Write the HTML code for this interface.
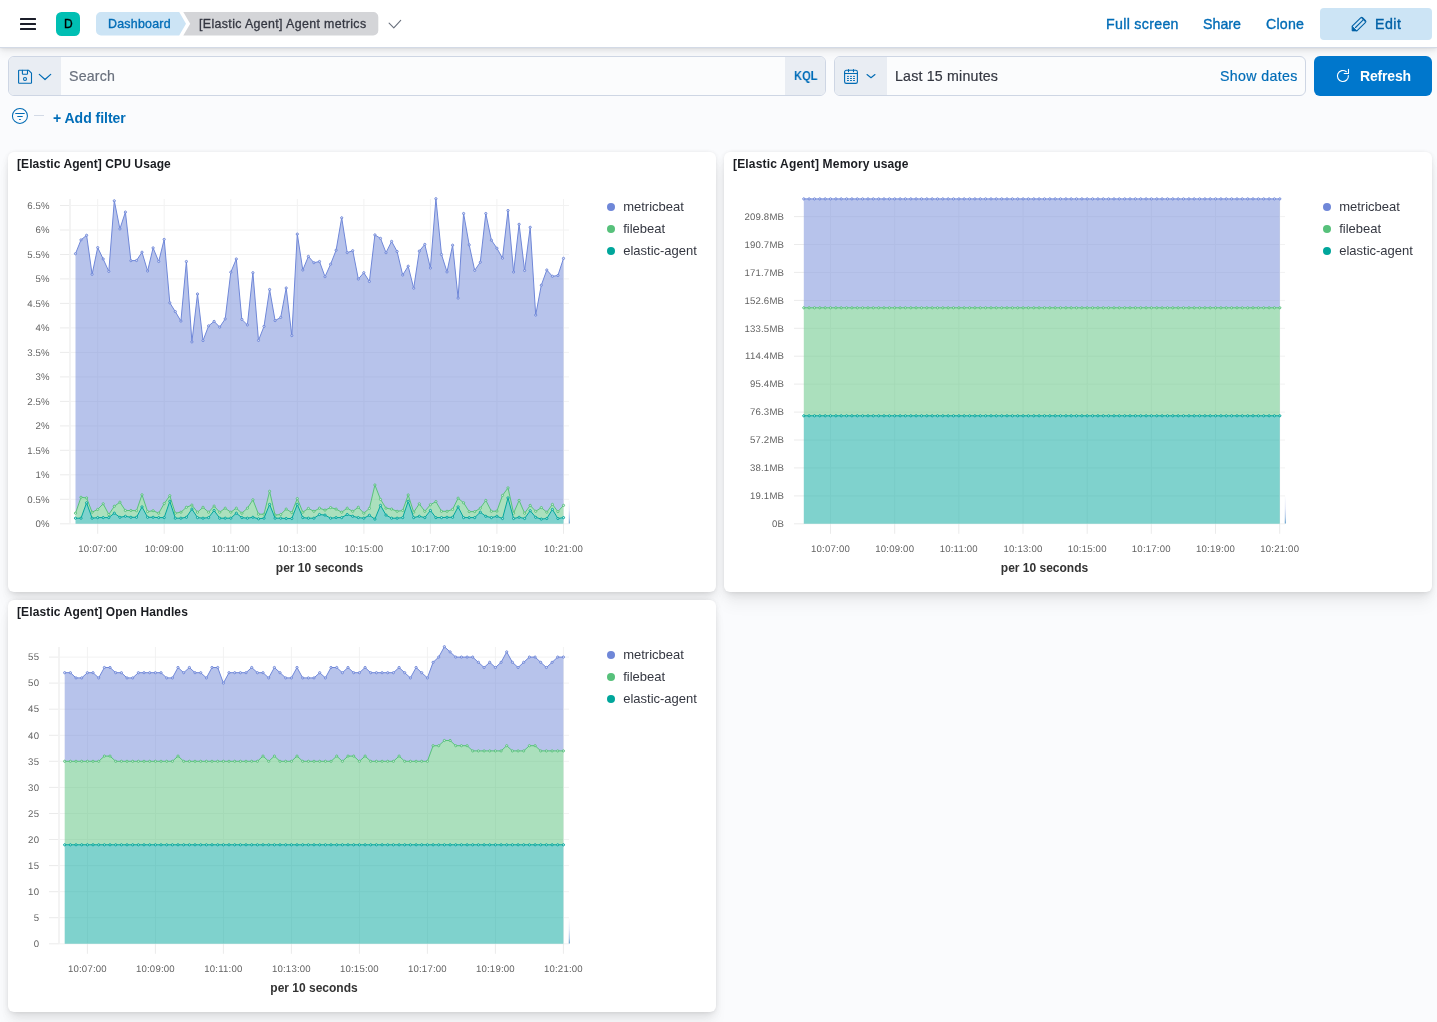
<!DOCTYPE html>
<html lang="en">
<head>
<meta charset="utf-8">
<title>[Elastic Agent] Agent metrics - Elastic</title>
<style>
*{box-sizing:border-box}
html,body{margin:0;padding:0}
body{width:1437px;height:1022px;overflow:hidden;background:#FAFBFD;font-family:"Liberation Sans",sans-serif;color:#343741;position:relative}
.abs{position:absolute}
.t{position:absolute;white-space:nowrap;line-height:1;will-change:transform}
/* header */
#hdr{left:0;top:0;width:1437px;height:48px;background:#fff;border-bottom:1px solid #D3DAE6;box-shadow:0 .7px 1.4px rgba(0,0,0,.07),0 1.9px 4px rgba(0,0,0,.06),0 4.5px 10px rgba(0,0,0,.06)}
.hb{position:absolute;left:20px;width:16px;height:2px;background:#1C1E2A;border-radius:.5px}
#av{left:56px;top:12px;width:24px;height:24px;border-radius:5.5px;background:#00BFB3}
.bc{position:absolute;top:12px;height:23.5px}
.lnk{color:#006DB8}
#edit{left:1320px;top:8px;width:112px;height:32px;border-radius:4px;background:#CCE4F5}
/* query bar */
.fld{position:absolute;top:56px;height:40px;border:1px solid #CED6E4;border-radius:6px;background:#FBFCFD;overflow:hidden}
.pre{position:absolute;top:0;bottom:0;background:#E9EDF3}
#refresh{left:1314px;top:56px;width:118px;height:40px;border-radius:6px;background:#0077CC}
/* panels */
.pn{position:absolute;background:#fff;border-radius:6px;box-shadow:0 .9px 4px -1px rgba(0,0,0,.08),0 2.6px 8px -1px rgba(0,0,0,.06),0 5.7px 12px -1px rgba(0,0,0,.05),0 15px 15px -1px rgba(0,0,0,.04)}
.pt{will-change:transform;position:absolute;left:8.6px;top:4.7px;font-size:12px;font-weight:700;color:#1A1C21;white-space:nowrap;line-height:14px;letter-spacing:.09px}
svg text{font-family:"Liberation Sans",sans-serif}
.tk{font-size:9.6px;letter-spacing:.2px;fill:#636363;text-rendering:geometricPrecision}
.ax{font-size:12px;font-weight:700;fill:#333}
.lg{font-size:13px;fill:#343741}
</style>
</head>
<body>

<!-- top header -->
<div id="hdr" class="abs">
  <div class="hb" style="top:18px"></div><div class="hb" style="top:23px"></div><div class="hb" style="top:28px"></div>
  <div id="av" class="abs"></div>
  <div class="t" style="left:63.8px;top:17.7px;font-size:12px;font-weight:400;color:#000;-webkit-text-stroke:.35px #000">D</div>
  <svg class="abs" style="left:96px;top:12px" width="290" height="24" viewBox="0 0 290 24">
    <path d="M5,0 H83.2 L90,11.75 L83.2,23.5 H5 A5,5 0 0 1 0,18.5 V5 A5,5 0 0 1 5,0Z" fill="#CCE4F5"/>
    <path d="M87.3,0 H277.3 A5,5 0 0 1 282.3,5 V18.5 A5,5 0 0 1 277.3,23.5 H87.3 L94.2,11.75Z" fill="#D4D5D8"/>
  </svg>
  <div class="t lnk" style="left:107.6px;top:18.1px;font-size:12.4px;font-weight:400;letter-spacing:.24px;-webkit-text-stroke:.35px #006BB4">Dashboard</div>
  <div class="t" style="left:199.3px;top:18.1px;font-size:12.4px;letter-spacing:.36px;color:#343741;-webkit-text-stroke:.3px #343741">[Elastic Agent] Agent metrics</div>
  <svg class="abs" style="left:386px;top:16px" width="20" height="16" viewBox="0 0 20 16"><path d="M3.1,7.2 L7.8,11.8 L14.7,4.3" fill="none" stroke="#69707D" stroke-width="1.1" stroke-linecap="round" stroke-linejoin="round"/></svg>

  <div class="t lnk" style="left:1105.7px;top:17px;font-size:14.2px;letter-spacing:.31px;-webkit-text-stroke:.35px #006BB4">Full screen</div>
  <div class="t lnk" style="left:1202.9px;top:17px;font-size:14.2px;letter-spacing:.02px;-webkit-text-stroke:.35px #006BB4">Share</div>
  <div class="t lnk" style="left:1265.7px;top:17px;font-size:14.2px;letter-spacing:.2px;-webkit-text-stroke:.35px #006BB4">Clone</div>
  <div id="edit" class="abs"></div>
  <svg class="abs" style="left:1350px;top:15px" width="18" height="18" viewBox="0 0 18 18">
    <g fill="none" stroke="#0061A6" stroke-width="1.1" stroke-linejoin="round" stroke-linecap="round">
      <path d="M2.2,11.2 L10.9,2.7 Q11.65,1.95 12.5,2.75 L15.5,5.75 Q16.3,6.55 15.55,7.4 L6.9,15.8"/>
      <path d="M12.1,3.35 L14.95,6.2" stroke-width="1.1"/>
      <path d="M5.5,12.5 L12.7,5.4"/>
    </g>
    <path d="M2.1,11.2 L6.9,15.9 H2.1Z" fill="#0061A6" stroke="#0061A6" stroke-width=".8" stroke-linejoin="round"/>
  </svg>
  <div class="t" style="left:1374.9px;top:17px;font-size:14.2px;letter-spacing:.48px;color:#0061A6;-webkit-text-stroke:.35px #0061A6">Edit</div>
</div>

<!-- query bar -->
<div class="fld" style="left:8px;width:818px">
  <div class="pre" style="left:0;width:52px"></div>
  <div class="pre" style="right:0;width:40px"></div>
</div>
<svg class="abs" style="left:16px;top:68px" width="40" height="18" viewBox="0 0 40 18">
  <g fill="none" stroke="#006BB4" stroke-width="1.1" stroke-linejoin="round" stroke-linecap="round">
    <path d="M3.1,2.3 H12.7 L15.5,5.2 V14.8 Q15.5,15.3 15,15.3 H3.1 Q2.6,15.3 2.6,14.8 V2.8 Q2.6,2.3 3.1,2.3Z"/>
    <path d="M6.4,2.3 V5.7 Q6.4,6.25 7,6.25 H10.9 Q11.5,6.25 11.5,5.7 V2.3"/>
    <circle cx="9" cy="11" r="1.5"/>
    <path d="M23.3,6.4 L29,11.5 L34.7,6.4" stroke-width="1.2"/>
  </g>
</svg>
<div class="t" style="left:69.3px;top:69.2px;font-size:14.2px;letter-spacing:.2px;color:#69707D;-webkit-text-stroke:.2px #69707D">Search</div>
<div class="t lnk" style="left:793.6px;top:70.3px;font-size:12.4px;font-weight:700;transform:scaleX(.9);transform-origin:0 0">KQL</div>

<div class="fld" style="left:834px;width:472px">
  <div class="pre" style="left:0;width:52px"></div>
</div>
<svg class="abs" style="left:842px;top:66px" width="40" height="20" viewBox="0 0 40 20">
  <g fill="none" stroke="#006BB4" stroke-width="1.1" stroke-linejoin="round" stroke-linecap="round">
    <rect x="2.6" y="4.3" width="12.8" height="13.1" rx="1.7"/>
    <path d="M2.6,7.5 H15.4"/>
    <path d="M6.5,3.5 V5.7 M11.5,3.5 V5.7"/>
    <path d="M5.40,10.4 h1.1 M8.45,10.4 h1.1 M11.45,10.4 h1.1 M5.40,12.5 h1.1 M8.45,12.5 h1.1 M11.45,12.5 h1.1 M5.40,14.5 h1.1 M8.45,14.5 h1.1 M11.45,14.5 h1.1" stroke-width=".95"/>
    <path d="M25,8.5 L29,11.75 L33,8.5"/>
  </g>
</svg>
<div class="t" style="left:895.2px;top:69.2px;font-size:14.2px;letter-spacing:.2px;color:#343741;-webkit-text-stroke:.2px #343741">Last 15 minutes</div>
<div class="t lnk" style="left:1219.5px;top:69.2px;font-size:14.2px;letter-spacing:.35px;-webkit-text-stroke:.2px #006BB4">Show dates</div>

<div id="refresh" class="abs"></div>
<svg class="abs" style="left:1334px;top:67px" width="18" height="18" viewBox="0 0 18 18">
  <g fill="none" stroke="#fff" stroke-width="1.1" stroke-linecap="round" stroke-linejoin="round">
    <path d="M12.36,4.73 A5.5,5.5 0 1 0 14.37,8.43"/>
    <path d="M14.5,2.2 V6.5 H10.2"/>
  </g>
</svg>
<div class="t" style="left:1359.8px;top:69.3px;font-size:14px;font-weight:700;letter-spacing:-.18px;color:#fff">Refresh</div>

<!-- filter row -->
<svg class="abs" style="left:10px;top:106px" width="40" height="20" viewBox="0 0 40 20">
  <g fill="none" stroke="#006BB4" stroke-width="1.05" stroke-linecap="round">
    <circle cx="9.93" cy="9.93" r="7.5"/>
    <path d="M5.7,7.5 H14.3 M7.7,10.45 H12.3 M9.5,13.45 H10.4"/>
  </g>
  <path d="M24,9.5 H34" stroke="#D3DAE6" stroke-width="1"/>
</svg>
<div class="t lnk" style="left:53.1px;top:110.9px;font-size:14px;font-weight:700;letter-spacing:-.02px">+ Add filter</div>

<!-- panels -->
<div class="pn" style="left:8px;top:152px;width:708px;height:439.7px"><div class="pt">[Elastic Agent] CPU Usage</div></div>
<div class="pn" style="left:724px;top:152px;width:708px;height:439.7px"><div class="pt" style="letter-spacing:.17px">[Elastic Agent] Memory usage</div></div>
<div class="pn" style="left:8px;top:600px;width:708px;height:411.7px"><div class="pt" style="letter-spacing:.12px">[Elastic Agent] Open Handles</div></div>

<svg class="abs" style="left:0;top:0" width="1437" height="1022" viewBox="0 0 1437 1022" shape-rendering="geometricPrecision">
<defs><linearGradient id="fade" x1="0" y1="0" x2="0" y2="1"><stop offset="0" stop-color="#6F87D8" stop-opacity="0"/><stop offset=".45" stop-color="#6F87D8" stop-opacity=".22"/><stop offset=".8" stop-color="#4A86C8" stop-opacity=".6"/><stop offset="1" stop-color="#2F7FB8" stop-opacity="1"/></linearGradient></defs>
<line x1="70" x2="569" y1="523.8" y2="523.8" stroke="#F2F2F2"/><line x1="60" x2="70" y1="523.8" y2="523.8" stroke="#EBEBEB"/><text x="49.8" y="527" text-anchor="end" class="tk">0%</text><line x1="70" x2="569" y1="499.3" y2="499.3" stroke="#F2F2F2"/><line x1="60" x2="70" y1="499.3" y2="499.3" stroke="#EBEBEB"/><text x="49.8" y="502.5" text-anchor="end" class="tk">0.5%</text><line x1="70" x2="569" y1="474.8" y2="474.8" stroke="#F2F2F2"/><line x1="60" x2="70" y1="474.8" y2="474.8" stroke="#EBEBEB"/><text x="49.8" y="478" text-anchor="end" class="tk">1%</text><line x1="70" x2="569" y1="450.3" y2="450.3" stroke="#F2F2F2"/><line x1="60" x2="70" y1="450.3" y2="450.3" stroke="#EBEBEB"/><text x="49.8" y="453.5" text-anchor="end" class="tk">1.5%</text><line x1="70" x2="569" y1="425.9" y2="425.9" stroke="#F2F2F2"/><line x1="60" x2="70" y1="425.9" y2="425.9" stroke="#EBEBEB"/><text x="49.8" y="429.1" text-anchor="end" class="tk">2%</text><line x1="70" x2="569" y1="401.4" y2="401.4" stroke="#F2F2F2"/><line x1="60" x2="70" y1="401.4" y2="401.4" stroke="#EBEBEB"/><text x="49.8" y="404.6" text-anchor="end" class="tk">2.5%</text><line x1="70" x2="569" y1="376.9" y2="376.9" stroke="#F2F2F2"/><line x1="60" x2="70" y1="376.9" y2="376.9" stroke="#EBEBEB"/><text x="49.8" y="380.1" text-anchor="end" class="tk">3%</text><line x1="70" x2="569" y1="352.4" y2="352.4" stroke="#F2F2F2"/><line x1="60" x2="70" y1="352.4" y2="352.4" stroke="#EBEBEB"/><text x="49.8" y="355.6" text-anchor="end" class="tk">3.5%</text><line x1="70" x2="569" y1="327.9" y2="327.9" stroke="#F2F2F2"/><line x1="60" x2="70" y1="327.9" y2="327.9" stroke="#EBEBEB"/><text x="49.8" y="331.1" text-anchor="end" class="tk">4%</text><line x1="70" x2="569" y1="303.4" y2="303.4" stroke="#F2F2F2"/><line x1="60" x2="70" y1="303.4" y2="303.4" stroke="#EBEBEB"/><text x="49.8" y="306.6" text-anchor="end" class="tk">4.5%</text><line x1="70" x2="569" y1="278.9" y2="278.9" stroke="#F2F2F2"/><line x1="60" x2="70" y1="278.9" y2="278.9" stroke="#EBEBEB"/><text x="49.8" y="282.1" text-anchor="end" class="tk">5%</text><line x1="70" x2="569" y1="254.5" y2="254.5" stroke="#F2F2F2"/><line x1="60" x2="70" y1="254.5" y2="254.5" stroke="#EBEBEB"/><text x="49.8" y="257.7" text-anchor="end" class="tk">5.5%</text><line x1="70" x2="569" y1="230" y2="230" stroke="#F2F2F2"/><line x1="60" x2="70" y1="230" y2="230" stroke="#EBEBEB"/><text x="49.8" y="233.2" text-anchor="end" class="tk">6%</text><line x1="70" x2="569" y1="205.5" y2="205.5" stroke="#F2F2F2"/><line x1="60" x2="70" y1="205.5" y2="205.5" stroke="#EBEBEB"/><text x="49.8" y="208.7" text-anchor="end" class="tk">6.5%</text><line x1="97.7" x2="97.7" y1="199" y2="523.8" stroke="#F2F2F2"/><line x1="97.7" x2="97.7" y1="523.8" y2="533.8" stroke="#EBEBEB"/><text x="97.7" y="552.3" text-anchor="middle" class="tk">10:07:00</text><line x1="164.2" x2="164.2" y1="199" y2="523.8" stroke="#F2F2F2"/><line x1="164.2" x2="164.2" y1="523.8" y2="533.8" stroke="#EBEBEB"/><text x="164.2" y="552.3" text-anchor="middle" class="tk">10:09:00</text><line x1="230.8" x2="230.8" y1="199" y2="523.8" stroke="#F2F2F2"/><line x1="230.8" x2="230.8" y1="523.8" y2="533.8" stroke="#EBEBEB"/><text x="230.8" y="552.3" text-anchor="middle" class="tk">10:11:00</text><line x1="297.3" x2="297.3" y1="199" y2="523.8" stroke="#F2F2F2"/><line x1="297.3" x2="297.3" y1="523.8" y2="533.8" stroke="#EBEBEB"/><text x="297.3" y="552.3" text-anchor="middle" class="tk">10:13:00</text><line x1="363.9" x2="363.9" y1="199" y2="523.8" stroke="#F2F2F2"/><line x1="363.9" x2="363.9" y1="523.8" y2="533.8" stroke="#EBEBEB"/><text x="363.9" y="552.3" text-anchor="middle" class="tk">10:15:00</text><line x1="430.4" x2="430.4" y1="199" y2="523.8" stroke="#F2F2F2"/><line x1="430.4" x2="430.4" y1="523.8" y2="533.8" stroke="#EBEBEB"/><text x="430.4" y="552.3" text-anchor="middle" class="tk">10:17:00</text><line x1="496.9" x2="496.9" y1="199" y2="523.8" stroke="#F2F2F2"/><line x1="496.9" x2="496.9" y1="523.8" y2="533.8" stroke="#EBEBEB"/><text x="496.9" y="552.3" text-anchor="middle" class="tk">10:19:00</text><line x1="563.5" x2="563.5" y1="199" y2="523.8" stroke="#F2F2F2"/><line x1="563.5" x2="563.5" y1="523.8" y2="533.8" stroke="#EBEBEB"/><text x="563.5" y="552.3" text-anchor="middle" class="tk">10:21:00</text><line x1="70" x2="70" y1="199" y2="523.8" stroke="#F2F2F2" stroke-width="1.8"/><text x="319.5" y="572" text-anchor="middle" class="ax">per 10 seconds</text><path d="M75.5,253.7 L81,239.9 L86.6,235.3 L92.1,274.3 L97.7,247.6 L103.2,259 L108.8,271.4 L114.3,200.8 L119.9,228.9 L125.4,212.1 L130.9,260.7 L136.5,260.5 L142,252.2 L147.6,271 L153.1,247.9 L158.7,261.5 L164.2,239.4 L169.8,302.8 L175.3,311.6 L180.9,321.1 L186.4,261.5 L191.9,341.9 L197.5,294 L203,340.6 L208.6,325.9 L214.1,321.4 L219.7,327.1 L225.2,318.9 L230.8,272.2 L236.3,259 L241.8,319.4 L247.4,324.9 L252.9,272.7 L258.5,340.4 L264,326.4 L269.6,289.5 L275.1,320.6 L280.7,317.4 L286.2,288 L291.8,335.6 L297.3,234.1 L302.8,270 L308.4,256.4 L313.9,262.7 L319.5,261.5 L325,276.7 L330.6,264.2 L336.1,250.2 L341.7,217.8 L347.2,252.6 L352.8,250.7 L358.3,279 L363.8,272.7 L369.4,281.5 L374.9,234.9 L380.5,238.4 L386,252.7 L391.6,241.4 L397.1,251.5 L402.7,275 L408.2,266.2 L413.7,288.2 L419.3,251.1 L424.8,244.4 L430.4,268 L435.9,198.7 L441.5,254.5 L447,271.9 L452.6,245.2 L458.1,298.1 L463.6,213.5 L469.2,244.9 L474.7,270.4 L480.3,262.2 L485.8,213.5 L491.4,240.2 L496.9,248.2 L502.5,258.2 L508,210.5 L513.6,272 L519.1,224.3 L524.6,270.5 L530.2,227.3 L535.7,315.1 L541.3,285.2 L546.8,270 L552.4,276.3 L557.9,275.5 L563.5,258.4 L563.5,505.4 L557.9,511.6 L552.4,504.4 L546.8,512.2 L541.3,507.6 L535.7,511.3 L530.2,505.4 L524.6,513.2 L519.1,500.4 L513.6,513.2 L508,487.9 L502.5,495.4 L496.9,511.1 L491.4,511.3 L485.8,500.4 L480.3,508.2 L474.7,511.6 L469.2,511.6 L463.6,502.8 L458.1,498.2 L452.6,509.4 L447,511.3 L441.5,511.3 L435.9,501.6 L430.4,504.7 L424.8,511.3 L419.3,503.8 L413.7,512.2 L408.2,495 L402.7,510.5 L397.1,511.3 L391.6,509.1 L386,508.2 L380.5,499.4 L374.9,485 L369.4,508.4 L363.8,513.2 L358.3,507.3 L352.8,511.3 L347.2,508.2 L341.7,512.2 L336.1,509.1 L330.6,507.6 L325,510.1 L319.5,508.2 L313.9,511.3 L308.4,508.4 L302.8,512.2 L297.3,498.6 L291.8,512.6 L286.2,509.1 L280.7,514.5 L275.1,515.1 L269.6,491.3 L264,514.2 L258.5,514.2 L252.9,499.8 L247.4,508.2 L241.8,513.2 L236.3,508.2 L230.8,512.2 L225.2,508.2 L219.7,512.2 L214.1,506.1 L208.6,512.2 L203,507.3 L197.5,512.2 L191.9,505.1 L186.4,507.3 L180.9,512.2 L175.3,513.2 L169.8,495.7 L164.2,503.6 L158.7,513.2 L153.1,510.7 L147.6,511.6 L142,494.8 L136.5,510.7 L130.9,510.5 L125.4,510.5 L119.9,502.2 L114.3,506.3 L108.8,514.5 L103.2,503.8 L97.7,509.4 L92.1,512.2 L86.6,497.9 L81,497.3 L75.5,513.2Z" fill="#6F87D8" fill-opacity="0.5"/><path d="M75.5,253.7 L81,239.9 L86.6,235.3 L92.1,274.3 L97.7,247.6 L103.2,259 L108.8,271.4 L114.3,200.8 L119.9,228.9 L125.4,212.1 L130.9,260.7 L136.5,260.5 L142,252.2 L147.6,271 L153.1,247.9 L158.7,261.5 L164.2,239.4 L169.8,302.8 L175.3,311.6 L180.9,321.1 L186.4,261.5 L191.9,341.9 L197.5,294 L203,340.6 L208.6,325.9 L214.1,321.4 L219.7,327.1 L225.2,318.9 L230.8,272.2 L236.3,259 L241.8,319.4 L247.4,324.9 L252.9,272.7 L258.5,340.4 L264,326.4 L269.6,289.5 L275.1,320.6 L280.7,317.4 L286.2,288 L291.8,335.6 L297.3,234.1 L302.8,270 L308.4,256.4 L313.9,262.7 L319.5,261.5 L325,276.7 L330.6,264.2 L336.1,250.2 L341.7,217.8 L347.2,252.6 L352.8,250.7 L358.3,279 L363.8,272.7 L369.4,281.5 L374.9,234.9 L380.5,238.4 L386,252.7 L391.6,241.4 L397.1,251.5 L402.7,275 L408.2,266.2 L413.7,288.2 L419.3,251.1 L424.8,244.4 L430.4,268 L435.9,198.7 L441.5,254.5 L447,271.9 L452.6,245.2 L458.1,298.1 L463.6,213.5 L469.2,244.9 L474.7,270.4 L480.3,262.2 L485.8,213.5 L491.4,240.2 L496.9,248.2 L502.5,258.2 L508,210.5 L513.6,272 L519.1,224.3 L524.6,270.5 L530.2,227.3 L535.7,315.1 L541.3,285.2 L546.8,270 L552.4,276.3 L557.9,275.5 L563.5,258.4" fill="none" stroke="#6F87D8" stroke-width="1" stroke-linejoin="round"/><path d="M74.4,253.7a1.1,1.1 0 1,0 2.2,0a1.1,1.1 0 1,0 -2.2,0M79.9,239.9a1.1,1.1 0 1,0 2.2,0a1.1,1.1 0 1,0 -2.2,0M85.5,235.3a1.1,1.1 0 1,0 2.2,0a1.1,1.1 0 1,0 -2.2,0M91,274.3a1.1,1.1 0 1,0 2.2,0a1.1,1.1 0 1,0 -2.2,0M96.6,247.6a1.1,1.1 0 1,0 2.2,0a1.1,1.1 0 1,0 -2.2,0M102.1,259a1.1,1.1 0 1,0 2.2,0a1.1,1.1 0 1,0 -2.2,0M107.7,271.4a1.1,1.1 0 1,0 2.2,0a1.1,1.1 0 1,0 -2.2,0M113.2,200.8a1.1,1.1 0 1,0 2.2,0a1.1,1.1 0 1,0 -2.2,0M118.8,228.9a1.1,1.1 0 1,0 2.2,0a1.1,1.1 0 1,0 -2.2,0M124.3,212.1a1.1,1.1 0 1,0 2.2,0a1.1,1.1 0 1,0 -2.2,0M129.8,260.7a1.1,1.1 0 1,0 2.2,0a1.1,1.1 0 1,0 -2.2,0M135.4,260.5a1.1,1.1 0 1,0 2.2,0a1.1,1.1 0 1,0 -2.2,0M140.9,252.2a1.1,1.1 0 1,0 2.2,0a1.1,1.1 0 1,0 -2.2,0M146.5,271a1.1,1.1 0 1,0 2.2,0a1.1,1.1 0 1,0 -2.2,0M152,247.9a1.1,1.1 0 1,0 2.2,0a1.1,1.1 0 1,0 -2.2,0M157.6,261.5a1.1,1.1 0 1,0 2.2,0a1.1,1.1 0 1,0 -2.2,0M163.1,239.4a1.1,1.1 0 1,0 2.2,0a1.1,1.1 0 1,0 -2.2,0M168.7,302.8a1.1,1.1 0 1,0 2.2,0a1.1,1.1 0 1,0 -2.2,0M174.2,311.6a1.1,1.1 0 1,0 2.2,0a1.1,1.1 0 1,0 -2.2,0M179.8,321.1a1.1,1.1 0 1,0 2.2,0a1.1,1.1 0 1,0 -2.2,0M185.3,261.5a1.1,1.1 0 1,0 2.2,0a1.1,1.1 0 1,0 -2.2,0M190.8,341.9a1.1,1.1 0 1,0 2.2,0a1.1,1.1 0 1,0 -2.2,0M196.4,294a1.1,1.1 0 1,0 2.2,0a1.1,1.1 0 1,0 -2.2,0M201.9,340.6a1.1,1.1 0 1,0 2.2,0a1.1,1.1 0 1,0 -2.2,0M207.5,325.9a1.1,1.1 0 1,0 2.2,0a1.1,1.1 0 1,0 -2.2,0M213,321.4a1.1,1.1 0 1,0 2.2,0a1.1,1.1 0 1,0 -2.2,0M218.6,327.1a1.1,1.1 0 1,0 2.2,0a1.1,1.1 0 1,0 -2.2,0M224.1,318.9a1.1,1.1 0 1,0 2.2,0a1.1,1.1 0 1,0 -2.2,0M229.7,272.2a1.1,1.1 0 1,0 2.2,0a1.1,1.1 0 1,0 -2.2,0M235.2,259a1.1,1.1 0 1,0 2.2,0a1.1,1.1 0 1,0 -2.2,0M240.8,319.4a1.1,1.1 0 1,0 2.2,0a1.1,1.1 0 1,0 -2.2,0M246.3,324.9a1.1,1.1 0 1,0 2.2,0a1.1,1.1 0 1,0 -2.2,0M251.8,272.7a1.1,1.1 0 1,0 2.2,0a1.1,1.1 0 1,0 -2.2,0M257.4,340.4a1.1,1.1 0 1,0 2.2,0a1.1,1.1 0 1,0 -2.2,0M262.9,326.4a1.1,1.1 0 1,0 2.2,0a1.1,1.1 0 1,0 -2.2,0M268.5,289.5a1.1,1.1 0 1,0 2.2,0a1.1,1.1 0 1,0 -2.2,0M274,320.6a1.1,1.1 0 1,0 2.2,0a1.1,1.1 0 1,0 -2.2,0M279.6,317.4a1.1,1.1 0 1,0 2.2,0a1.1,1.1 0 1,0 -2.2,0M285.1,288a1.1,1.1 0 1,0 2.2,0a1.1,1.1 0 1,0 -2.2,0M290.7,335.6a1.1,1.1 0 1,0 2.2,0a1.1,1.1 0 1,0 -2.2,0M296.2,234.1a1.1,1.1 0 1,0 2.2,0a1.1,1.1 0 1,0 -2.2,0M301.7,270a1.1,1.1 0 1,0 2.2,0a1.1,1.1 0 1,0 -2.2,0M307.3,256.4a1.1,1.1 0 1,0 2.2,0a1.1,1.1 0 1,0 -2.2,0M312.8,262.7a1.1,1.1 0 1,0 2.2,0a1.1,1.1 0 1,0 -2.2,0M318.4,261.5a1.1,1.1 0 1,0 2.2,0a1.1,1.1 0 1,0 -2.2,0M323.9,276.7a1.1,1.1 0 1,0 2.2,0a1.1,1.1 0 1,0 -2.2,0M329.5,264.2a1.1,1.1 0 1,0 2.2,0a1.1,1.1 0 1,0 -2.2,0M335,250.2a1.1,1.1 0 1,0 2.2,0a1.1,1.1 0 1,0 -2.2,0M340.6,217.8a1.1,1.1 0 1,0 2.2,0a1.1,1.1 0 1,0 -2.2,0M346.1,252.6a1.1,1.1 0 1,0 2.2,0a1.1,1.1 0 1,0 -2.2,0M351.6,250.7a1.1,1.1 0 1,0 2.2,0a1.1,1.1 0 1,0 -2.2,0M357.2,279a1.1,1.1 0 1,0 2.2,0a1.1,1.1 0 1,0 -2.2,0M362.7,272.7a1.1,1.1 0 1,0 2.2,0a1.1,1.1 0 1,0 -2.2,0M368.3,281.5a1.1,1.1 0 1,0 2.2,0a1.1,1.1 0 1,0 -2.2,0M373.8,234.9a1.1,1.1 0 1,0 2.2,0a1.1,1.1 0 1,0 -2.2,0M379.4,238.4a1.1,1.1 0 1,0 2.2,0a1.1,1.1 0 1,0 -2.2,0M384.9,252.7a1.1,1.1 0 1,0 2.2,0a1.1,1.1 0 1,0 -2.2,0M390.5,241.4a1.1,1.1 0 1,0 2.2,0a1.1,1.1 0 1,0 -2.2,0M396,251.5a1.1,1.1 0 1,0 2.2,0a1.1,1.1 0 1,0 -2.2,0M401.6,275a1.1,1.1 0 1,0 2.2,0a1.1,1.1 0 1,0 -2.2,0M407.1,266.2a1.1,1.1 0 1,0 2.2,0a1.1,1.1 0 1,0 -2.2,0M412.6,288.2a1.1,1.1 0 1,0 2.2,0a1.1,1.1 0 1,0 -2.2,0M418.2,251.1a1.1,1.1 0 1,0 2.2,0a1.1,1.1 0 1,0 -2.2,0M423.7,244.4a1.1,1.1 0 1,0 2.2,0a1.1,1.1 0 1,0 -2.2,0M429.3,268a1.1,1.1 0 1,0 2.2,0a1.1,1.1 0 1,0 -2.2,0M434.8,198.7a1.1,1.1 0 1,0 2.2,0a1.1,1.1 0 1,0 -2.2,0M440.4,254.5a1.1,1.1 0 1,0 2.2,0a1.1,1.1 0 1,0 -2.2,0M445.9,271.9a1.1,1.1 0 1,0 2.2,0a1.1,1.1 0 1,0 -2.2,0M451.5,245.2a1.1,1.1 0 1,0 2.2,0a1.1,1.1 0 1,0 -2.2,0M457,298.1a1.1,1.1 0 1,0 2.2,0a1.1,1.1 0 1,0 -2.2,0M462.5,213.5a1.1,1.1 0 1,0 2.2,0a1.1,1.1 0 1,0 -2.2,0M468.1,244.9a1.1,1.1 0 1,0 2.2,0a1.1,1.1 0 1,0 -2.2,0M473.6,270.4a1.1,1.1 0 1,0 2.2,0a1.1,1.1 0 1,0 -2.2,0M479.2,262.2a1.1,1.1 0 1,0 2.2,0a1.1,1.1 0 1,0 -2.2,0M484.7,213.5a1.1,1.1 0 1,0 2.2,0a1.1,1.1 0 1,0 -2.2,0M490.3,240.2a1.1,1.1 0 1,0 2.2,0a1.1,1.1 0 1,0 -2.2,0M495.8,248.2a1.1,1.1 0 1,0 2.2,0a1.1,1.1 0 1,0 -2.2,0M501.4,258.2a1.1,1.1 0 1,0 2.2,0a1.1,1.1 0 1,0 -2.2,0M506.9,210.5a1.1,1.1 0 1,0 2.2,0a1.1,1.1 0 1,0 -2.2,0M512.5,272a1.1,1.1 0 1,0 2.2,0a1.1,1.1 0 1,0 -2.2,0M518,224.3a1.1,1.1 0 1,0 2.2,0a1.1,1.1 0 1,0 -2.2,0M523.5,270.5a1.1,1.1 0 1,0 2.2,0a1.1,1.1 0 1,0 -2.2,0M529.1,227.3a1.1,1.1 0 1,0 2.2,0a1.1,1.1 0 1,0 -2.2,0M534.6,315.1a1.1,1.1 0 1,0 2.2,0a1.1,1.1 0 1,0 -2.2,0M540.2,285.2a1.1,1.1 0 1,0 2.2,0a1.1,1.1 0 1,0 -2.2,0M545.7,270a1.1,1.1 0 1,0 2.2,0a1.1,1.1 0 1,0 -2.2,0M551.3,276.3a1.1,1.1 0 1,0 2.2,0a1.1,1.1 0 1,0 -2.2,0M556.8,275.5a1.1,1.1 0 1,0 2.2,0a1.1,1.1 0 1,0 -2.2,0M562.4,258.4a1.1,1.1 0 1,0 2.2,0a1.1,1.1 0 1,0 -2.2,0" fill="#fff" fill-opacity="0.6" stroke="#6F87D8" stroke-width="1"/><path d="M75.5,513.2 L81,497.3 L86.6,497.9 L92.1,512.2 L97.7,509.4 L103.2,503.8 L108.8,514.5 L114.3,506.3 L119.9,502.2 L125.4,510.5 L130.9,510.5 L136.5,510.7 L142,494.8 L147.6,511.6 L153.1,510.7 L158.7,513.2 L164.2,503.6 L169.8,495.7 L175.3,513.2 L180.9,512.2 L186.4,507.3 L191.9,505.1 L197.5,512.2 L203,507.3 L208.6,512.2 L214.1,506.1 L219.7,512.2 L225.2,508.2 L230.8,512.2 L236.3,508.2 L241.8,513.2 L247.4,508.2 L252.9,499.8 L258.5,514.2 L264,514.2 L269.6,491.3 L275.1,515.1 L280.7,514.5 L286.2,509.1 L291.8,512.6 L297.3,498.6 L302.8,512.2 L308.4,508.4 L313.9,511.3 L319.5,508.2 L325,510.1 L330.6,507.6 L336.1,509.1 L341.7,512.2 L347.2,508.2 L352.8,511.3 L358.3,507.3 L363.8,513.2 L369.4,508.4 L374.9,485 L380.5,499.4 L386,508.2 L391.6,509.1 L397.1,511.3 L402.7,510.5 L408.2,495 L413.7,512.2 L419.3,503.8 L424.8,511.3 L430.4,504.7 L435.9,501.6 L441.5,511.3 L447,511.3 L452.6,509.4 L458.1,498.2 L463.6,502.8 L469.2,511.6 L474.7,511.6 L480.3,508.2 L485.8,500.4 L491.4,511.3 L496.9,511.1 L502.5,495.4 L508,487.9 L513.6,513.2 L519.1,500.4 L524.6,513.2 L530.2,505.4 L535.7,511.3 L541.3,507.6 L546.8,512.2 L552.4,504.4 L557.9,511.6 L563.5,505.4 L563.5,517.6 L557.9,518.5 L552.4,509.4 L546.8,518.5 L541.3,519.1 L535.7,517.3 L530.2,510.7 L524.6,518.5 L519.1,517.3 L513.6,518.5 L508,497.9 L502.5,518.5 L496.9,516.3 L491.4,517.6 L485.8,516.3 L480.3,512.2 L474.7,517.6 L469.2,517.6 L463.6,517.6 L458.1,506.9 L452.6,517.3 L447,517.3 L441.5,517.6 L435.9,517.6 L430.4,510.5 L424.8,517.6 L419.3,516.3 L413.7,517.6 L408.2,501.3 L402.7,517.6 L397.1,518.2 L391.6,518.2 L386,515.1 L380.5,505.4 L374.9,519.1 L369.4,515.3 L363.8,518.2 L358.3,517.6 L352.8,516.3 L347.2,514.5 L341.7,517.6 L336.1,517.6 L330.6,518.2 L325,515.1 L319.5,514.5 L313.9,518.2 L308.4,518.2 L302.8,517.6 L297.3,504.4 L291.8,518.5 L286.2,518.5 L280.7,518.2 L275.1,518.2 L269.6,504.4 L264,518.2 L258.5,518.8 L252.9,517.3 L247.4,518.2 L241.8,517.6 L236.3,513.2 L230.8,518.2 L225.2,518.2 L219.7,518.2 L214.1,510.5 L208.6,517.6 L203,518.2 L197.5,517.6 L191.9,509.1 L186.4,517.3 L180.9,518.2 L175.3,518.2 L169.8,501.3 L164.2,517.6 L158.7,517.6 L153.1,517.3 L147.6,517.3 L142,506.9 L136.5,517.3 L130.9,517.3 L125.4,516.3 L119.9,517.3 L114.3,513.2 L108.8,517.6 L103.2,517.6 L97.7,517.6 L92.1,518.2 L86.6,502.8 L81,518.2 L75.5,518.2Z" fill="#57C17B" fill-opacity="0.5"/><path d="M75.5,513.2 L81,497.3 L86.6,497.9 L92.1,512.2 L97.7,509.4 L103.2,503.8 L108.8,514.5 L114.3,506.3 L119.9,502.2 L125.4,510.5 L130.9,510.5 L136.5,510.7 L142,494.8 L147.6,511.6 L153.1,510.7 L158.7,513.2 L164.2,503.6 L169.8,495.7 L175.3,513.2 L180.9,512.2 L186.4,507.3 L191.9,505.1 L197.5,512.2 L203,507.3 L208.6,512.2 L214.1,506.1 L219.7,512.2 L225.2,508.2 L230.8,512.2 L236.3,508.2 L241.8,513.2 L247.4,508.2 L252.9,499.8 L258.5,514.2 L264,514.2 L269.6,491.3 L275.1,515.1 L280.7,514.5 L286.2,509.1 L291.8,512.6 L297.3,498.6 L302.8,512.2 L308.4,508.4 L313.9,511.3 L319.5,508.2 L325,510.1 L330.6,507.6 L336.1,509.1 L341.7,512.2 L347.2,508.2 L352.8,511.3 L358.3,507.3 L363.8,513.2 L369.4,508.4 L374.9,485 L380.5,499.4 L386,508.2 L391.6,509.1 L397.1,511.3 L402.7,510.5 L408.2,495 L413.7,512.2 L419.3,503.8 L424.8,511.3 L430.4,504.7 L435.9,501.6 L441.5,511.3 L447,511.3 L452.6,509.4 L458.1,498.2 L463.6,502.8 L469.2,511.6 L474.7,511.6 L480.3,508.2 L485.8,500.4 L491.4,511.3 L496.9,511.1 L502.5,495.4 L508,487.9 L513.6,513.2 L519.1,500.4 L524.6,513.2 L530.2,505.4 L535.7,511.3 L541.3,507.6 L546.8,512.2 L552.4,504.4 L557.9,511.6 L563.5,505.4" fill="none" stroke="#57C17B" stroke-width="1" stroke-linejoin="round"/><path d="M74.4,513.2a1.1,1.1 0 1,0 2.2,0a1.1,1.1 0 1,0 -2.2,0M79.9,497.3a1.1,1.1 0 1,0 2.2,0a1.1,1.1 0 1,0 -2.2,0M85.5,497.9a1.1,1.1 0 1,0 2.2,0a1.1,1.1 0 1,0 -2.2,0M91,512.2a1.1,1.1 0 1,0 2.2,0a1.1,1.1 0 1,0 -2.2,0M96.6,509.4a1.1,1.1 0 1,0 2.2,0a1.1,1.1 0 1,0 -2.2,0M102.1,503.8a1.1,1.1 0 1,0 2.2,0a1.1,1.1 0 1,0 -2.2,0M107.7,514.5a1.1,1.1 0 1,0 2.2,0a1.1,1.1 0 1,0 -2.2,0M113.2,506.3a1.1,1.1 0 1,0 2.2,0a1.1,1.1 0 1,0 -2.2,0M118.8,502.2a1.1,1.1 0 1,0 2.2,0a1.1,1.1 0 1,0 -2.2,0M124.3,510.5a1.1,1.1 0 1,0 2.2,0a1.1,1.1 0 1,0 -2.2,0M129.8,510.5a1.1,1.1 0 1,0 2.2,0a1.1,1.1 0 1,0 -2.2,0M135.4,510.7a1.1,1.1 0 1,0 2.2,0a1.1,1.1 0 1,0 -2.2,0M140.9,494.8a1.1,1.1 0 1,0 2.2,0a1.1,1.1 0 1,0 -2.2,0M146.5,511.6a1.1,1.1 0 1,0 2.2,0a1.1,1.1 0 1,0 -2.2,0M152,510.7a1.1,1.1 0 1,0 2.2,0a1.1,1.1 0 1,0 -2.2,0M157.6,513.2a1.1,1.1 0 1,0 2.2,0a1.1,1.1 0 1,0 -2.2,0M163.1,503.6a1.1,1.1 0 1,0 2.2,0a1.1,1.1 0 1,0 -2.2,0M168.7,495.7a1.1,1.1 0 1,0 2.2,0a1.1,1.1 0 1,0 -2.2,0M174.2,513.2a1.1,1.1 0 1,0 2.2,0a1.1,1.1 0 1,0 -2.2,0M179.8,512.2a1.1,1.1 0 1,0 2.2,0a1.1,1.1 0 1,0 -2.2,0M185.3,507.3a1.1,1.1 0 1,0 2.2,0a1.1,1.1 0 1,0 -2.2,0M190.8,505.1a1.1,1.1 0 1,0 2.2,0a1.1,1.1 0 1,0 -2.2,0M196.4,512.2a1.1,1.1 0 1,0 2.2,0a1.1,1.1 0 1,0 -2.2,0M201.9,507.3a1.1,1.1 0 1,0 2.2,0a1.1,1.1 0 1,0 -2.2,0M207.5,512.2a1.1,1.1 0 1,0 2.2,0a1.1,1.1 0 1,0 -2.2,0M213,506.1a1.1,1.1 0 1,0 2.2,0a1.1,1.1 0 1,0 -2.2,0M218.6,512.2a1.1,1.1 0 1,0 2.2,0a1.1,1.1 0 1,0 -2.2,0M224.1,508.2a1.1,1.1 0 1,0 2.2,0a1.1,1.1 0 1,0 -2.2,0M229.7,512.2a1.1,1.1 0 1,0 2.2,0a1.1,1.1 0 1,0 -2.2,0M235.2,508.2a1.1,1.1 0 1,0 2.2,0a1.1,1.1 0 1,0 -2.2,0M240.8,513.2a1.1,1.1 0 1,0 2.2,0a1.1,1.1 0 1,0 -2.2,0M246.3,508.2a1.1,1.1 0 1,0 2.2,0a1.1,1.1 0 1,0 -2.2,0M251.8,499.8a1.1,1.1 0 1,0 2.2,0a1.1,1.1 0 1,0 -2.2,0M257.4,514.2a1.1,1.1 0 1,0 2.2,0a1.1,1.1 0 1,0 -2.2,0M262.9,514.2a1.1,1.1 0 1,0 2.2,0a1.1,1.1 0 1,0 -2.2,0M268.5,491.3a1.1,1.1 0 1,0 2.2,0a1.1,1.1 0 1,0 -2.2,0M274,515.1a1.1,1.1 0 1,0 2.2,0a1.1,1.1 0 1,0 -2.2,0M279.6,514.5a1.1,1.1 0 1,0 2.2,0a1.1,1.1 0 1,0 -2.2,0M285.1,509.1a1.1,1.1 0 1,0 2.2,0a1.1,1.1 0 1,0 -2.2,0M290.7,512.6a1.1,1.1 0 1,0 2.2,0a1.1,1.1 0 1,0 -2.2,0M296.2,498.6a1.1,1.1 0 1,0 2.2,0a1.1,1.1 0 1,0 -2.2,0M301.7,512.2a1.1,1.1 0 1,0 2.2,0a1.1,1.1 0 1,0 -2.2,0M307.3,508.4a1.1,1.1 0 1,0 2.2,0a1.1,1.1 0 1,0 -2.2,0M312.8,511.3a1.1,1.1 0 1,0 2.2,0a1.1,1.1 0 1,0 -2.2,0M318.4,508.2a1.1,1.1 0 1,0 2.2,0a1.1,1.1 0 1,0 -2.2,0M323.9,510.1a1.1,1.1 0 1,0 2.2,0a1.1,1.1 0 1,0 -2.2,0M329.5,507.6a1.1,1.1 0 1,0 2.2,0a1.1,1.1 0 1,0 -2.2,0M335,509.1a1.1,1.1 0 1,0 2.2,0a1.1,1.1 0 1,0 -2.2,0M340.6,512.2a1.1,1.1 0 1,0 2.2,0a1.1,1.1 0 1,0 -2.2,0M346.1,508.2a1.1,1.1 0 1,0 2.2,0a1.1,1.1 0 1,0 -2.2,0M351.6,511.3a1.1,1.1 0 1,0 2.2,0a1.1,1.1 0 1,0 -2.2,0M357.2,507.3a1.1,1.1 0 1,0 2.2,0a1.1,1.1 0 1,0 -2.2,0M362.7,513.2a1.1,1.1 0 1,0 2.2,0a1.1,1.1 0 1,0 -2.2,0M368.3,508.4a1.1,1.1 0 1,0 2.2,0a1.1,1.1 0 1,0 -2.2,0M373.8,485a1.1,1.1 0 1,0 2.2,0a1.1,1.1 0 1,0 -2.2,0M379.4,499.4a1.1,1.1 0 1,0 2.2,0a1.1,1.1 0 1,0 -2.2,0M384.9,508.2a1.1,1.1 0 1,0 2.2,0a1.1,1.1 0 1,0 -2.2,0M390.5,509.1a1.1,1.1 0 1,0 2.2,0a1.1,1.1 0 1,0 -2.2,0M396,511.3a1.1,1.1 0 1,0 2.2,0a1.1,1.1 0 1,0 -2.2,0M401.6,510.5a1.1,1.1 0 1,0 2.2,0a1.1,1.1 0 1,0 -2.2,0M407.1,495a1.1,1.1 0 1,0 2.2,0a1.1,1.1 0 1,0 -2.2,0M412.6,512.2a1.1,1.1 0 1,0 2.2,0a1.1,1.1 0 1,0 -2.2,0M418.2,503.8a1.1,1.1 0 1,0 2.2,0a1.1,1.1 0 1,0 -2.2,0M423.7,511.3a1.1,1.1 0 1,0 2.2,0a1.1,1.1 0 1,0 -2.2,0M429.3,504.7a1.1,1.1 0 1,0 2.2,0a1.1,1.1 0 1,0 -2.2,0M434.8,501.6a1.1,1.1 0 1,0 2.2,0a1.1,1.1 0 1,0 -2.2,0M440.4,511.3a1.1,1.1 0 1,0 2.2,0a1.1,1.1 0 1,0 -2.2,0M445.9,511.3a1.1,1.1 0 1,0 2.2,0a1.1,1.1 0 1,0 -2.2,0M451.5,509.4a1.1,1.1 0 1,0 2.2,0a1.1,1.1 0 1,0 -2.2,0M457,498.2a1.1,1.1 0 1,0 2.2,0a1.1,1.1 0 1,0 -2.2,0M462.5,502.8a1.1,1.1 0 1,0 2.2,0a1.1,1.1 0 1,0 -2.2,0M468.1,511.6a1.1,1.1 0 1,0 2.2,0a1.1,1.1 0 1,0 -2.2,0M473.6,511.6a1.1,1.1 0 1,0 2.2,0a1.1,1.1 0 1,0 -2.2,0M479.2,508.2a1.1,1.1 0 1,0 2.2,0a1.1,1.1 0 1,0 -2.2,0M484.7,500.4a1.1,1.1 0 1,0 2.2,0a1.1,1.1 0 1,0 -2.2,0M490.3,511.3a1.1,1.1 0 1,0 2.2,0a1.1,1.1 0 1,0 -2.2,0M495.8,511.1a1.1,1.1 0 1,0 2.2,0a1.1,1.1 0 1,0 -2.2,0M501.4,495.4a1.1,1.1 0 1,0 2.2,0a1.1,1.1 0 1,0 -2.2,0M506.9,487.9a1.1,1.1 0 1,0 2.2,0a1.1,1.1 0 1,0 -2.2,0M512.5,513.2a1.1,1.1 0 1,0 2.2,0a1.1,1.1 0 1,0 -2.2,0M518,500.4a1.1,1.1 0 1,0 2.2,0a1.1,1.1 0 1,0 -2.2,0M523.5,513.2a1.1,1.1 0 1,0 2.2,0a1.1,1.1 0 1,0 -2.2,0M529.1,505.4a1.1,1.1 0 1,0 2.2,0a1.1,1.1 0 1,0 -2.2,0M534.6,511.3a1.1,1.1 0 1,0 2.2,0a1.1,1.1 0 1,0 -2.2,0M540.2,507.6a1.1,1.1 0 1,0 2.2,0a1.1,1.1 0 1,0 -2.2,0M545.7,512.2a1.1,1.1 0 1,0 2.2,0a1.1,1.1 0 1,0 -2.2,0M551.3,504.4a1.1,1.1 0 1,0 2.2,0a1.1,1.1 0 1,0 -2.2,0M556.8,511.6a1.1,1.1 0 1,0 2.2,0a1.1,1.1 0 1,0 -2.2,0M562.4,505.4a1.1,1.1 0 1,0 2.2,0a1.1,1.1 0 1,0 -2.2,0" fill="#fff" fill-opacity="0.6" stroke="#57C17B" stroke-width="1"/><path d="M75.5,518.2 L81,518.2 L86.6,502.8 L92.1,518.2 L97.7,517.6 L103.2,517.6 L108.8,517.6 L114.3,513.2 L119.9,517.3 L125.4,516.3 L130.9,517.3 L136.5,517.3 L142,506.9 L147.6,517.3 L153.1,517.3 L158.7,517.6 L164.2,517.6 L169.8,501.3 L175.3,518.2 L180.9,518.2 L186.4,517.3 L191.9,509.1 L197.5,517.6 L203,518.2 L208.6,517.6 L214.1,510.5 L219.7,518.2 L225.2,518.2 L230.8,518.2 L236.3,513.2 L241.8,517.6 L247.4,518.2 L252.9,517.3 L258.5,518.8 L264,518.2 L269.6,504.4 L275.1,518.2 L280.7,518.2 L286.2,518.5 L291.8,518.5 L297.3,504.4 L302.8,517.6 L308.4,518.2 L313.9,518.2 L319.5,514.5 L325,515.1 L330.6,518.2 L336.1,517.6 L341.7,517.6 L347.2,514.5 L352.8,516.3 L358.3,517.6 L363.8,518.2 L369.4,515.3 L374.9,519.1 L380.5,505.4 L386,515.1 L391.6,518.2 L397.1,518.2 L402.7,517.6 L408.2,501.3 L413.7,517.6 L419.3,516.3 L424.8,517.6 L430.4,510.5 L435.9,517.6 L441.5,517.6 L447,517.3 L452.6,517.3 L458.1,506.9 L463.6,517.6 L469.2,517.6 L474.7,517.6 L480.3,512.2 L485.8,516.3 L491.4,517.6 L496.9,516.3 L502.5,518.5 L508,497.9 L513.6,518.5 L519.1,517.3 L524.6,518.5 L530.2,510.7 L535.7,517.3 L541.3,519.1 L546.8,518.5 L552.4,509.4 L557.9,518.5 L563.5,517.6 L563.5,523.8 L557.9,523.8 L552.4,523.8 L546.8,523.8 L541.3,523.8 L535.7,523.8 L530.2,523.8 L524.6,523.8 L519.1,523.8 L513.6,523.8 L508,523.8 L502.5,523.8 L496.9,523.8 L491.4,523.8 L485.8,523.8 L480.3,523.8 L474.7,523.8 L469.2,523.8 L463.6,523.8 L458.1,523.8 L452.6,523.8 L447,523.8 L441.5,523.8 L435.9,523.8 L430.4,523.8 L424.8,523.8 L419.3,523.8 L413.7,523.8 L408.2,523.8 L402.7,523.8 L397.1,523.8 L391.6,523.8 L386,523.8 L380.5,523.8 L374.9,523.8 L369.4,523.8 L363.8,523.8 L358.3,523.8 L352.8,523.8 L347.2,523.8 L341.7,523.8 L336.1,523.8 L330.6,523.8 L325,523.8 L319.5,523.8 L313.9,523.8 L308.4,523.8 L302.8,523.8 L297.3,523.8 L291.8,523.8 L286.2,523.8 L280.7,523.8 L275.1,523.8 L269.6,523.8 L264,523.8 L258.5,523.8 L252.9,523.8 L247.4,523.8 L241.8,523.8 L236.3,523.8 L230.8,523.8 L225.2,523.8 L219.7,523.8 L214.1,523.8 L208.6,523.8 L203,523.8 L197.5,523.8 L191.9,523.8 L186.4,523.8 L180.9,523.8 L175.3,523.8 L169.8,523.8 L164.2,523.8 L158.7,523.8 L153.1,523.8 L147.6,523.8 L142,523.8 L136.5,523.8 L130.9,523.8 L125.4,523.8 L119.9,523.8 L114.3,523.8 L108.8,523.8 L103.2,523.8 L97.7,523.8 L92.1,523.8 L86.6,523.8 L81,523.8 L75.5,523.8Z" fill="#00A69B" fill-opacity="0.5"/><path d="M75.5,518.2 L81,518.2 L86.6,502.8 L92.1,518.2 L97.7,517.6 L103.2,517.6 L108.8,517.6 L114.3,513.2 L119.9,517.3 L125.4,516.3 L130.9,517.3 L136.5,517.3 L142,506.9 L147.6,517.3 L153.1,517.3 L158.7,517.6 L164.2,517.6 L169.8,501.3 L175.3,518.2 L180.9,518.2 L186.4,517.3 L191.9,509.1 L197.5,517.6 L203,518.2 L208.6,517.6 L214.1,510.5 L219.7,518.2 L225.2,518.2 L230.8,518.2 L236.3,513.2 L241.8,517.6 L247.4,518.2 L252.9,517.3 L258.5,518.8 L264,518.2 L269.6,504.4 L275.1,518.2 L280.7,518.2 L286.2,518.5 L291.8,518.5 L297.3,504.4 L302.8,517.6 L308.4,518.2 L313.9,518.2 L319.5,514.5 L325,515.1 L330.6,518.2 L336.1,517.6 L341.7,517.6 L347.2,514.5 L352.8,516.3 L358.3,517.6 L363.8,518.2 L369.4,515.3 L374.9,519.1 L380.5,505.4 L386,515.1 L391.6,518.2 L397.1,518.2 L402.7,517.6 L408.2,501.3 L413.7,517.6 L419.3,516.3 L424.8,517.6 L430.4,510.5 L435.9,517.6 L441.5,517.6 L447,517.3 L452.6,517.3 L458.1,506.9 L463.6,517.6 L469.2,517.6 L474.7,517.6 L480.3,512.2 L485.8,516.3 L491.4,517.6 L496.9,516.3 L502.5,518.5 L508,497.9 L513.6,518.5 L519.1,517.3 L524.6,518.5 L530.2,510.7 L535.7,517.3 L541.3,519.1 L546.8,518.5 L552.4,509.4 L557.9,518.5 L563.5,517.6" fill="none" stroke="#00A69B" stroke-width="1" stroke-linejoin="round"/><path d="M74.4,518.2a1.1,1.1 0 1,0 2.2,0a1.1,1.1 0 1,0 -2.2,0M79.9,518.2a1.1,1.1 0 1,0 2.2,0a1.1,1.1 0 1,0 -2.2,0M85.5,502.8a1.1,1.1 0 1,0 2.2,0a1.1,1.1 0 1,0 -2.2,0M91,518.2a1.1,1.1 0 1,0 2.2,0a1.1,1.1 0 1,0 -2.2,0M96.6,517.6a1.1,1.1 0 1,0 2.2,0a1.1,1.1 0 1,0 -2.2,0M102.1,517.6a1.1,1.1 0 1,0 2.2,0a1.1,1.1 0 1,0 -2.2,0M107.7,517.6a1.1,1.1 0 1,0 2.2,0a1.1,1.1 0 1,0 -2.2,0M113.2,513.2a1.1,1.1 0 1,0 2.2,0a1.1,1.1 0 1,0 -2.2,0M118.8,517.3a1.1,1.1 0 1,0 2.2,0a1.1,1.1 0 1,0 -2.2,0M124.3,516.3a1.1,1.1 0 1,0 2.2,0a1.1,1.1 0 1,0 -2.2,0M129.8,517.3a1.1,1.1 0 1,0 2.2,0a1.1,1.1 0 1,0 -2.2,0M135.4,517.3a1.1,1.1 0 1,0 2.2,0a1.1,1.1 0 1,0 -2.2,0M140.9,506.9a1.1,1.1 0 1,0 2.2,0a1.1,1.1 0 1,0 -2.2,0M146.5,517.3a1.1,1.1 0 1,0 2.2,0a1.1,1.1 0 1,0 -2.2,0M152,517.3a1.1,1.1 0 1,0 2.2,0a1.1,1.1 0 1,0 -2.2,0M157.6,517.6a1.1,1.1 0 1,0 2.2,0a1.1,1.1 0 1,0 -2.2,0M163.1,517.6a1.1,1.1 0 1,0 2.2,0a1.1,1.1 0 1,0 -2.2,0M168.7,501.3a1.1,1.1 0 1,0 2.2,0a1.1,1.1 0 1,0 -2.2,0M174.2,518.2a1.1,1.1 0 1,0 2.2,0a1.1,1.1 0 1,0 -2.2,0M179.8,518.2a1.1,1.1 0 1,0 2.2,0a1.1,1.1 0 1,0 -2.2,0M185.3,517.3a1.1,1.1 0 1,0 2.2,0a1.1,1.1 0 1,0 -2.2,0M190.8,509.1a1.1,1.1 0 1,0 2.2,0a1.1,1.1 0 1,0 -2.2,0M196.4,517.6a1.1,1.1 0 1,0 2.2,0a1.1,1.1 0 1,0 -2.2,0M201.9,518.2a1.1,1.1 0 1,0 2.2,0a1.1,1.1 0 1,0 -2.2,0M207.5,517.6a1.1,1.1 0 1,0 2.2,0a1.1,1.1 0 1,0 -2.2,0M213,510.5a1.1,1.1 0 1,0 2.2,0a1.1,1.1 0 1,0 -2.2,0M218.6,518.2a1.1,1.1 0 1,0 2.2,0a1.1,1.1 0 1,0 -2.2,0M224.1,518.2a1.1,1.1 0 1,0 2.2,0a1.1,1.1 0 1,0 -2.2,0M229.7,518.2a1.1,1.1 0 1,0 2.2,0a1.1,1.1 0 1,0 -2.2,0M235.2,513.2a1.1,1.1 0 1,0 2.2,0a1.1,1.1 0 1,0 -2.2,0M240.8,517.6a1.1,1.1 0 1,0 2.2,0a1.1,1.1 0 1,0 -2.2,0M246.3,518.2a1.1,1.1 0 1,0 2.2,0a1.1,1.1 0 1,0 -2.2,0M251.8,517.3a1.1,1.1 0 1,0 2.2,0a1.1,1.1 0 1,0 -2.2,0M257.4,518.8a1.1,1.1 0 1,0 2.2,0a1.1,1.1 0 1,0 -2.2,0M262.9,518.2a1.1,1.1 0 1,0 2.2,0a1.1,1.1 0 1,0 -2.2,0M268.5,504.4a1.1,1.1 0 1,0 2.2,0a1.1,1.1 0 1,0 -2.2,0M274,518.2a1.1,1.1 0 1,0 2.2,0a1.1,1.1 0 1,0 -2.2,0M279.6,518.2a1.1,1.1 0 1,0 2.2,0a1.1,1.1 0 1,0 -2.2,0M285.1,518.5a1.1,1.1 0 1,0 2.2,0a1.1,1.1 0 1,0 -2.2,0M290.7,518.5a1.1,1.1 0 1,0 2.2,0a1.1,1.1 0 1,0 -2.2,0M296.2,504.4a1.1,1.1 0 1,0 2.2,0a1.1,1.1 0 1,0 -2.2,0M301.7,517.6a1.1,1.1 0 1,0 2.2,0a1.1,1.1 0 1,0 -2.2,0M307.3,518.2a1.1,1.1 0 1,0 2.2,0a1.1,1.1 0 1,0 -2.2,0M312.8,518.2a1.1,1.1 0 1,0 2.2,0a1.1,1.1 0 1,0 -2.2,0M318.4,514.5a1.1,1.1 0 1,0 2.2,0a1.1,1.1 0 1,0 -2.2,0M323.9,515.1a1.1,1.1 0 1,0 2.2,0a1.1,1.1 0 1,0 -2.2,0M329.5,518.2a1.1,1.1 0 1,0 2.2,0a1.1,1.1 0 1,0 -2.2,0M335,517.6a1.1,1.1 0 1,0 2.2,0a1.1,1.1 0 1,0 -2.2,0M340.6,517.6a1.1,1.1 0 1,0 2.2,0a1.1,1.1 0 1,0 -2.2,0M346.1,514.5a1.1,1.1 0 1,0 2.2,0a1.1,1.1 0 1,0 -2.2,0M351.6,516.3a1.1,1.1 0 1,0 2.2,0a1.1,1.1 0 1,0 -2.2,0M357.2,517.6a1.1,1.1 0 1,0 2.2,0a1.1,1.1 0 1,0 -2.2,0M362.7,518.2a1.1,1.1 0 1,0 2.2,0a1.1,1.1 0 1,0 -2.2,0M368.3,515.3a1.1,1.1 0 1,0 2.2,0a1.1,1.1 0 1,0 -2.2,0M373.8,519.1a1.1,1.1 0 1,0 2.2,0a1.1,1.1 0 1,0 -2.2,0M379.4,505.4a1.1,1.1 0 1,0 2.2,0a1.1,1.1 0 1,0 -2.2,0M384.9,515.1a1.1,1.1 0 1,0 2.2,0a1.1,1.1 0 1,0 -2.2,0M390.5,518.2a1.1,1.1 0 1,0 2.2,0a1.1,1.1 0 1,0 -2.2,0M396,518.2a1.1,1.1 0 1,0 2.2,0a1.1,1.1 0 1,0 -2.2,0M401.6,517.6a1.1,1.1 0 1,0 2.2,0a1.1,1.1 0 1,0 -2.2,0M407.1,501.3a1.1,1.1 0 1,0 2.2,0a1.1,1.1 0 1,0 -2.2,0M412.6,517.6a1.1,1.1 0 1,0 2.2,0a1.1,1.1 0 1,0 -2.2,0M418.2,516.3a1.1,1.1 0 1,0 2.2,0a1.1,1.1 0 1,0 -2.2,0M423.7,517.6a1.1,1.1 0 1,0 2.2,0a1.1,1.1 0 1,0 -2.2,0M429.3,510.5a1.1,1.1 0 1,0 2.2,0a1.1,1.1 0 1,0 -2.2,0M434.8,517.6a1.1,1.1 0 1,0 2.2,0a1.1,1.1 0 1,0 -2.2,0M440.4,517.6a1.1,1.1 0 1,0 2.2,0a1.1,1.1 0 1,0 -2.2,0M445.9,517.3a1.1,1.1 0 1,0 2.2,0a1.1,1.1 0 1,0 -2.2,0M451.5,517.3a1.1,1.1 0 1,0 2.2,0a1.1,1.1 0 1,0 -2.2,0M457,506.9a1.1,1.1 0 1,0 2.2,0a1.1,1.1 0 1,0 -2.2,0M462.5,517.6a1.1,1.1 0 1,0 2.2,0a1.1,1.1 0 1,0 -2.2,0M468.1,517.6a1.1,1.1 0 1,0 2.2,0a1.1,1.1 0 1,0 -2.2,0M473.6,517.6a1.1,1.1 0 1,0 2.2,0a1.1,1.1 0 1,0 -2.2,0M479.2,512.2a1.1,1.1 0 1,0 2.2,0a1.1,1.1 0 1,0 -2.2,0M484.7,516.3a1.1,1.1 0 1,0 2.2,0a1.1,1.1 0 1,0 -2.2,0M490.3,517.6a1.1,1.1 0 1,0 2.2,0a1.1,1.1 0 1,0 -2.2,0M495.8,516.3a1.1,1.1 0 1,0 2.2,0a1.1,1.1 0 1,0 -2.2,0M501.4,518.5a1.1,1.1 0 1,0 2.2,0a1.1,1.1 0 1,0 -2.2,0M506.9,497.9a1.1,1.1 0 1,0 2.2,0a1.1,1.1 0 1,0 -2.2,0M512.5,518.5a1.1,1.1 0 1,0 2.2,0a1.1,1.1 0 1,0 -2.2,0M518,517.3a1.1,1.1 0 1,0 2.2,0a1.1,1.1 0 1,0 -2.2,0M523.5,518.5a1.1,1.1 0 1,0 2.2,0a1.1,1.1 0 1,0 -2.2,0M529.1,510.7a1.1,1.1 0 1,0 2.2,0a1.1,1.1 0 1,0 -2.2,0M534.6,517.3a1.1,1.1 0 1,0 2.2,0a1.1,1.1 0 1,0 -2.2,0M540.2,519.1a1.1,1.1 0 1,0 2.2,0a1.1,1.1 0 1,0 -2.2,0M545.7,518.5a1.1,1.1 0 1,0 2.2,0a1.1,1.1 0 1,0 -2.2,0M551.3,509.4a1.1,1.1 0 1,0 2.2,0a1.1,1.1 0 1,0 -2.2,0M556.8,518.5a1.1,1.1 0 1,0 2.2,0a1.1,1.1 0 1,0 -2.2,0M562.4,517.6a1.1,1.1 0 1,0 2.2,0a1.1,1.1 0 1,0 -2.2,0" fill="#fff" fill-opacity="0.6" stroke="#00A69B" stroke-width="1"/><rect x="568.8" y="499" width=".9" height="24.5" fill="url(#fade)"/><circle cx="611" cy="207" r="4" fill="#6F87D8"/><text x="623.2" y="211" class="lg">metricbeat</text><circle cx="611" cy="229" r="4" fill="#57C17B"/><text x="623.2" y="233" class="lg">filebeat</text><circle cx="611" cy="251" r="4" fill="#00A69B"/><text x="623.2" y="255" class="lg">elastic-agent</text><line x1="804" x2="1285" y1="523.8" y2="523.8" stroke="#F2F2F2"/><line x1="794" x2="804" y1="523.8" y2="523.8" stroke="#EBEBEB"/><text x="784.2" y="527" text-anchor="end" class="tk">0B</text><line x1="804" x2="1285" y1="495.9" y2="495.9" stroke="#F2F2F2"/><line x1="794" x2="804" y1="495.9" y2="495.9" stroke="#EBEBEB"/><text x="784.2" y="499.1" text-anchor="end" class="tk">19.1MB</text><line x1="804" x2="1285" y1="467.9" y2="467.9" stroke="#F2F2F2"/><line x1="794" x2="804" y1="467.9" y2="467.9" stroke="#EBEBEB"/><text x="784.2" y="471.1" text-anchor="end" class="tk">38.1MB</text><line x1="804" x2="1285" y1="440" y2="440" stroke="#F2F2F2"/><line x1="794" x2="804" y1="440" y2="440" stroke="#EBEBEB"/><text x="784.2" y="443.2" text-anchor="end" class="tk">57.2MB</text><line x1="804" x2="1285" y1="412.1" y2="412.1" stroke="#F2F2F2"/><line x1="794" x2="804" y1="412.1" y2="412.1" stroke="#EBEBEB"/><text x="784.2" y="415.3" text-anchor="end" class="tk">76.3MB</text><line x1="804" x2="1285" y1="384.1" y2="384.1" stroke="#F2F2F2"/><line x1="794" x2="804" y1="384.1" y2="384.1" stroke="#EBEBEB"/><text x="784.2" y="387.3" text-anchor="end" class="tk">95.4MB</text><line x1="804" x2="1285" y1="356.2" y2="356.2" stroke="#F2F2F2"/><line x1="794" x2="804" y1="356.2" y2="356.2" stroke="#EBEBEB"/><text x="784.2" y="359.4" text-anchor="end" class="tk">114.4MB</text><line x1="804" x2="1285" y1="328.3" y2="328.3" stroke="#F2F2F2"/><line x1="794" x2="804" y1="328.3" y2="328.3" stroke="#EBEBEB"/><text x="784.2" y="331.5" text-anchor="end" class="tk">133.5MB</text><line x1="804" x2="1285" y1="300.4" y2="300.4" stroke="#F2F2F2"/><line x1="794" x2="804" y1="300.4" y2="300.4" stroke="#EBEBEB"/><text x="784.2" y="303.6" text-anchor="end" class="tk">152.6MB</text><line x1="804" x2="1285" y1="272.4" y2="272.4" stroke="#F2F2F2"/><line x1="794" x2="804" y1="272.4" y2="272.4" stroke="#EBEBEB"/><text x="784.2" y="275.6" text-anchor="end" class="tk">171.7MB</text><line x1="804" x2="1285" y1="244.5" y2="244.5" stroke="#F2F2F2"/><line x1="794" x2="804" y1="244.5" y2="244.5" stroke="#EBEBEB"/><text x="784.2" y="247.7" text-anchor="end" class="tk">190.7MB</text><line x1="804" x2="1285" y1="216.6" y2="216.6" stroke="#F2F2F2"/><line x1="794" x2="804" y1="216.6" y2="216.6" stroke="#EBEBEB"/><text x="784.2" y="219.8" text-anchor="end" class="tk">209.8MB</text><line x1="830.5" x2="830.5" y1="199" y2="523.8" stroke="#F2F2F2"/><line x1="830.5" x2="830.5" y1="523.8" y2="533.8" stroke="#EBEBEB"/><text x="830.5" y="552.3" text-anchor="middle" class="tk">10:07:00</text><line x1="894.7" x2="894.7" y1="199" y2="523.8" stroke="#F2F2F2"/><line x1="894.7" x2="894.7" y1="523.8" y2="533.8" stroke="#EBEBEB"/><text x="894.7" y="552.3" text-anchor="middle" class="tk">10:09:00</text><line x1="958.8" x2="958.8" y1="199" y2="523.8" stroke="#F2F2F2"/><line x1="958.8" x2="958.8" y1="523.8" y2="533.8" stroke="#EBEBEB"/><text x="958.8" y="552.3" text-anchor="middle" class="tk">10:11:00</text><line x1="1023" x2="1023" y1="199" y2="523.8" stroke="#F2F2F2"/><line x1="1023" x2="1023" y1="523.8" y2="533.8" stroke="#EBEBEB"/><text x="1023" y="552.3" text-anchor="middle" class="tk">10:13:00</text><line x1="1087.2" x2="1087.2" y1="199" y2="523.8" stroke="#F2F2F2"/><line x1="1087.2" x2="1087.2" y1="523.8" y2="533.8" stroke="#EBEBEB"/><text x="1087.2" y="552.3" text-anchor="middle" class="tk">10:15:00</text><line x1="1151.3" x2="1151.3" y1="199" y2="523.8" stroke="#F2F2F2"/><line x1="1151.3" x2="1151.3" y1="523.8" y2="533.8" stroke="#EBEBEB"/><text x="1151.3" y="552.3" text-anchor="middle" class="tk">10:17:00</text><line x1="1215.5" x2="1215.5" y1="199" y2="523.8" stroke="#F2F2F2"/><line x1="1215.5" x2="1215.5" y1="523.8" y2="533.8" stroke="#EBEBEB"/><text x="1215.5" y="552.3" text-anchor="middle" class="tk">10:19:00</text><line x1="1279.7" x2="1279.7" y1="199" y2="523.8" stroke="#F2F2F2"/><line x1="1279.7" x2="1279.7" y1="523.8" y2="533.8" stroke="#EBEBEB"/><text x="1279.7" y="552.3" text-anchor="middle" class="tk">10:21:00</text><text x="1044.5" y="572" text-anchor="middle" class="ax">per 10 seconds</text><path d="M803.8,198.9 L809.1,198.9 L814.5,198.9 L819.8,198.9 L825.2,198.9 L830.5,198.9 L835.9,198.9 L841.2,198.9 L846.6,198.9 L851.9,198.9 L857.3,198.9 L862.6,198.9 L868,198.9 L873.3,198.9 L878.7,198.9 L884,198.9 L889.4,198.9 L894.7,198.9 L900.1,198.9 L905.4,198.9 L910.8,198.9 L916.1,198.9 L921.5,198.9 L926.8,198.9 L932.2,198.9 L937.5,198.9 L942.8,198.9 L948.2,198.9 L953.5,198.9 L958.9,198.9 L964.2,198.9 L969.6,198.9 L974.9,198.9 L980.3,198.9 L985.6,198.9 L991,198.9 L996.3,198.9 L1001.7,198.9 L1007,198.9 L1012.4,198.9 L1017.7,198.9 L1023.1,198.9 L1028.4,198.9 L1033.8,198.9 L1039.1,198.9 L1044.5,198.9 L1049.8,198.9 L1055.2,198.9 L1060.5,198.9 L1065.9,198.9 L1071.2,198.9 L1076.5,198.9 L1081.9,198.9 L1087.2,198.9 L1092.6,198.9 L1097.9,198.9 L1103.3,198.9 L1108.6,198.9 L1114,198.9 L1119.3,198.9 L1124.7,198.9 L1130,198.9 L1135.4,198.9 L1140.7,198.9 L1146.1,198.9 L1151.4,198.9 L1156.8,198.9 L1162.1,198.9 L1167.5,198.9 L1172.8,198.9 L1178.2,198.9 L1183.5,198.9 L1188.9,198.9 L1194.2,198.9 L1199.6,198.9 L1204.9,198.9 L1210.2,198.9 L1215.6,198.9 L1220.9,198.9 L1226.3,198.9 L1231.6,198.9 L1237,198.9 L1242.3,198.9 L1247.7,198.9 L1253,198.9 L1258.4,198.9 L1263.7,198.9 L1269.1,198.9 L1274.4,198.9 L1279.8,198.9 L1279.8,307.8 L1274.4,307.8 L1269.1,307.8 L1263.7,307.8 L1258.4,307.8 L1253,307.8 L1247.7,307.8 L1242.3,307.8 L1237,307.8 L1231.6,307.8 L1226.3,307.8 L1220.9,307.8 L1215.6,307.8 L1210.2,307.8 L1204.9,307.8 L1199.6,307.8 L1194.2,307.8 L1188.9,307.8 L1183.5,307.8 L1178.2,307.8 L1172.8,307.8 L1167.5,307.8 L1162.1,307.8 L1156.8,307.8 L1151.4,307.8 L1146.1,307.8 L1140.7,307.8 L1135.4,307.8 L1130,307.8 L1124.7,307.8 L1119.3,307.8 L1114,307.8 L1108.6,307.8 L1103.3,307.8 L1097.9,307.8 L1092.6,307.8 L1087.2,307.8 L1081.9,307.8 L1076.5,307.8 L1071.2,307.8 L1065.9,307.8 L1060.5,307.8 L1055.2,307.8 L1049.8,307.8 L1044.5,307.8 L1039.1,307.8 L1033.8,307.8 L1028.4,307.8 L1023.1,307.8 L1017.7,307.8 L1012.4,307.8 L1007,307.8 L1001.7,307.8 L996.3,307.8 L991,307.8 L985.6,307.8 L980.3,307.8 L974.9,307.8 L969.6,307.8 L964.2,307.8 L958.9,307.8 L953.5,307.8 L948.2,307.8 L942.8,307.8 L937.5,307.8 L932.2,307.8 L926.8,307.8 L921.5,307.8 L916.1,307.8 L910.8,307.8 L905.4,307.8 L900.1,307.8 L894.7,307.8 L889.4,307.8 L884,307.8 L878.7,307.8 L873.3,307.8 L868,307.8 L862.6,307.8 L857.3,307.8 L851.9,307.8 L846.6,307.8 L841.2,307.8 L835.9,307.8 L830.5,307.8 L825.2,307.8 L819.8,307.8 L814.5,307.8 L809.1,307.8 L803.8,307.8Z" fill="#6F87D8" fill-opacity="0.5"/><path d="M803.8,198.9 L809.1,198.9 L814.5,198.9 L819.8,198.9 L825.2,198.9 L830.5,198.9 L835.9,198.9 L841.2,198.9 L846.6,198.9 L851.9,198.9 L857.3,198.9 L862.6,198.9 L868,198.9 L873.3,198.9 L878.7,198.9 L884,198.9 L889.4,198.9 L894.7,198.9 L900.1,198.9 L905.4,198.9 L910.8,198.9 L916.1,198.9 L921.5,198.9 L926.8,198.9 L932.2,198.9 L937.5,198.9 L942.8,198.9 L948.2,198.9 L953.5,198.9 L958.9,198.9 L964.2,198.9 L969.6,198.9 L974.9,198.9 L980.3,198.9 L985.6,198.9 L991,198.9 L996.3,198.9 L1001.7,198.9 L1007,198.9 L1012.4,198.9 L1017.7,198.9 L1023.1,198.9 L1028.4,198.9 L1033.8,198.9 L1039.1,198.9 L1044.5,198.9 L1049.8,198.9 L1055.2,198.9 L1060.5,198.9 L1065.9,198.9 L1071.2,198.9 L1076.5,198.9 L1081.9,198.9 L1087.2,198.9 L1092.6,198.9 L1097.9,198.9 L1103.3,198.9 L1108.6,198.9 L1114,198.9 L1119.3,198.9 L1124.7,198.9 L1130,198.9 L1135.4,198.9 L1140.7,198.9 L1146.1,198.9 L1151.4,198.9 L1156.8,198.9 L1162.1,198.9 L1167.5,198.9 L1172.8,198.9 L1178.2,198.9 L1183.5,198.9 L1188.9,198.9 L1194.2,198.9 L1199.6,198.9 L1204.9,198.9 L1210.2,198.9 L1215.6,198.9 L1220.9,198.9 L1226.3,198.9 L1231.6,198.9 L1237,198.9 L1242.3,198.9 L1247.7,198.9 L1253,198.9 L1258.4,198.9 L1263.7,198.9 L1269.1,198.9 L1274.4,198.9 L1279.8,198.9" fill="none" stroke="#6F87D8" stroke-width="1" stroke-linejoin="round"/><path d="M802.7,198.9a1.1,1.1 0 1,0 2.2,0a1.1,1.1 0 1,0 -2.2,0M808,198.9a1.1,1.1 0 1,0 2.2,0a1.1,1.1 0 1,0 -2.2,0M813.4,198.9a1.1,1.1 0 1,0 2.2,0a1.1,1.1 0 1,0 -2.2,0M818.7,198.9a1.1,1.1 0 1,0 2.2,0a1.1,1.1 0 1,0 -2.2,0M824.1,198.9a1.1,1.1 0 1,0 2.2,0a1.1,1.1 0 1,0 -2.2,0M829.4,198.9a1.1,1.1 0 1,0 2.2,0a1.1,1.1 0 1,0 -2.2,0M834.8,198.9a1.1,1.1 0 1,0 2.2,0a1.1,1.1 0 1,0 -2.2,0M840.1,198.9a1.1,1.1 0 1,0 2.2,0a1.1,1.1 0 1,0 -2.2,0M845.5,198.9a1.1,1.1 0 1,0 2.2,0a1.1,1.1 0 1,0 -2.2,0M850.8,198.9a1.1,1.1 0 1,0 2.2,0a1.1,1.1 0 1,0 -2.2,0M856.2,198.9a1.1,1.1 0 1,0 2.2,0a1.1,1.1 0 1,0 -2.2,0M861.5,198.9a1.1,1.1 0 1,0 2.2,0a1.1,1.1 0 1,0 -2.2,0M866.9,198.9a1.1,1.1 0 1,0 2.2,0a1.1,1.1 0 1,0 -2.2,0M872.2,198.9a1.1,1.1 0 1,0 2.2,0a1.1,1.1 0 1,0 -2.2,0M877.6,198.9a1.1,1.1 0 1,0 2.2,0a1.1,1.1 0 1,0 -2.2,0M882.9,198.9a1.1,1.1 0 1,0 2.2,0a1.1,1.1 0 1,0 -2.2,0M888.3,198.9a1.1,1.1 0 1,0 2.2,0a1.1,1.1 0 1,0 -2.2,0M893.6,198.9a1.1,1.1 0 1,0 2.2,0a1.1,1.1 0 1,0 -2.2,0M899,198.9a1.1,1.1 0 1,0 2.2,0a1.1,1.1 0 1,0 -2.2,0M904.3,198.9a1.1,1.1 0 1,0 2.2,0a1.1,1.1 0 1,0 -2.2,0M909.7,198.9a1.1,1.1 0 1,0 2.2,0a1.1,1.1 0 1,0 -2.2,0M915,198.9a1.1,1.1 0 1,0 2.2,0a1.1,1.1 0 1,0 -2.2,0M920.4,198.9a1.1,1.1 0 1,0 2.2,0a1.1,1.1 0 1,0 -2.2,0M925.7,198.9a1.1,1.1 0 1,0 2.2,0a1.1,1.1 0 1,0 -2.2,0M931.1,198.9a1.1,1.1 0 1,0 2.2,0a1.1,1.1 0 1,0 -2.2,0M936.4,198.9a1.1,1.1 0 1,0 2.2,0a1.1,1.1 0 1,0 -2.2,0M941.7,198.9a1.1,1.1 0 1,0 2.2,0a1.1,1.1 0 1,0 -2.2,0M947.1,198.9a1.1,1.1 0 1,0 2.2,0a1.1,1.1 0 1,0 -2.2,0M952.4,198.9a1.1,1.1 0 1,0 2.2,0a1.1,1.1 0 1,0 -2.2,0M957.8,198.9a1.1,1.1 0 1,0 2.2,0a1.1,1.1 0 1,0 -2.2,0M963.1,198.9a1.1,1.1 0 1,0 2.2,0a1.1,1.1 0 1,0 -2.2,0M968.5,198.9a1.1,1.1 0 1,0 2.2,0a1.1,1.1 0 1,0 -2.2,0M973.8,198.9a1.1,1.1 0 1,0 2.2,0a1.1,1.1 0 1,0 -2.2,0M979.2,198.9a1.1,1.1 0 1,0 2.2,0a1.1,1.1 0 1,0 -2.2,0M984.5,198.9a1.1,1.1 0 1,0 2.2,0a1.1,1.1 0 1,0 -2.2,0M989.9,198.9a1.1,1.1 0 1,0 2.2,0a1.1,1.1 0 1,0 -2.2,0M995.2,198.9a1.1,1.1 0 1,0 2.2,0a1.1,1.1 0 1,0 -2.2,0M1000.6,198.9a1.1,1.1 0 1,0 2.2,0a1.1,1.1 0 1,0 -2.2,0M1005.9,198.9a1.1,1.1 0 1,0 2.2,0a1.1,1.1 0 1,0 -2.2,0M1011.3,198.9a1.1,1.1 0 1,0 2.2,0a1.1,1.1 0 1,0 -2.2,0M1016.6,198.9a1.1,1.1 0 1,0 2.2,0a1.1,1.1 0 1,0 -2.2,0M1022,198.9a1.1,1.1 0 1,0 2.2,0a1.1,1.1 0 1,0 -2.2,0M1027.3,198.9a1.1,1.1 0 1,0 2.2,0a1.1,1.1 0 1,0 -2.2,0M1032.7,198.9a1.1,1.1 0 1,0 2.2,0a1.1,1.1 0 1,0 -2.2,0M1038,198.9a1.1,1.1 0 1,0 2.2,0a1.1,1.1 0 1,0 -2.2,0M1043.4,198.9a1.1,1.1 0 1,0 2.2,0a1.1,1.1 0 1,0 -2.2,0M1048.7,198.9a1.1,1.1 0 1,0 2.2,0a1.1,1.1 0 1,0 -2.2,0M1054.1,198.9a1.1,1.1 0 1,0 2.2,0a1.1,1.1 0 1,0 -2.2,0M1059.4,198.9a1.1,1.1 0 1,0 2.2,0a1.1,1.1 0 1,0 -2.2,0M1064.8,198.9a1.1,1.1 0 1,0 2.2,0a1.1,1.1 0 1,0 -2.2,0M1070.1,198.9a1.1,1.1 0 1,0 2.2,0a1.1,1.1 0 1,0 -2.2,0M1075.4,198.9a1.1,1.1 0 1,0 2.2,0a1.1,1.1 0 1,0 -2.2,0M1080.8,198.9a1.1,1.1 0 1,0 2.2,0a1.1,1.1 0 1,0 -2.2,0M1086.1,198.9a1.1,1.1 0 1,0 2.2,0a1.1,1.1 0 1,0 -2.2,0M1091.5,198.9a1.1,1.1 0 1,0 2.2,0a1.1,1.1 0 1,0 -2.2,0M1096.8,198.9a1.1,1.1 0 1,0 2.2,0a1.1,1.1 0 1,0 -2.2,0M1102.2,198.9a1.1,1.1 0 1,0 2.2,0a1.1,1.1 0 1,0 -2.2,0M1107.5,198.9a1.1,1.1 0 1,0 2.2,0a1.1,1.1 0 1,0 -2.2,0M1112.9,198.9a1.1,1.1 0 1,0 2.2,0a1.1,1.1 0 1,0 -2.2,0M1118.2,198.9a1.1,1.1 0 1,0 2.2,0a1.1,1.1 0 1,0 -2.2,0M1123.6,198.9a1.1,1.1 0 1,0 2.2,0a1.1,1.1 0 1,0 -2.2,0M1128.9,198.9a1.1,1.1 0 1,0 2.2,0a1.1,1.1 0 1,0 -2.2,0M1134.3,198.9a1.1,1.1 0 1,0 2.2,0a1.1,1.1 0 1,0 -2.2,0M1139.6,198.9a1.1,1.1 0 1,0 2.2,0a1.1,1.1 0 1,0 -2.2,0M1145,198.9a1.1,1.1 0 1,0 2.2,0a1.1,1.1 0 1,0 -2.2,0M1150.3,198.9a1.1,1.1 0 1,0 2.2,0a1.1,1.1 0 1,0 -2.2,0M1155.7,198.9a1.1,1.1 0 1,0 2.2,0a1.1,1.1 0 1,0 -2.2,0M1161,198.9a1.1,1.1 0 1,0 2.2,0a1.1,1.1 0 1,0 -2.2,0M1166.4,198.9a1.1,1.1 0 1,0 2.2,0a1.1,1.1 0 1,0 -2.2,0M1171.7,198.9a1.1,1.1 0 1,0 2.2,0a1.1,1.1 0 1,0 -2.2,0M1177.1,198.9a1.1,1.1 0 1,0 2.2,0a1.1,1.1 0 1,0 -2.2,0M1182.4,198.9a1.1,1.1 0 1,0 2.2,0a1.1,1.1 0 1,0 -2.2,0M1187.8,198.9a1.1,1.1 0 1,0 2.2,0a1.1,1.1 0 1,0 -2.2,0M1193.1,198.9a1.1,1.1 0 1,0 2.2,0a1.1,1.1 0 1,0 -2.2,0M1198.5,198.9a1.1,1.1 0 1,0 2.2,0a1.1,1.1 0 1,0 -2.2,0M1203.8,198.9a1.1,1.1 0 1,0 2.2,0a1.1,1.1 0 1,0 -2.2,0M1209.1,198.9a1.1,1.1 0 1,0 2.2,0a1.1,1.1 0 1,0 -2.2,0M1214.5,198.9a1.1,1.1 0 1,0 2.2,0a1.1,1.1 0 1,0 -2.2,0M1219.8,198.9a1.1,1.1 0 1,0 2.2,0a1.1,1.1 0 1,0 -2.2,0M1225.2,198.9a1.1,1.1 0 1,0 2.2,0a1.1,1.1 0 1,0 -2.2,0M1230.5,198.9a1.1,1.1 0 1,0 2.2,0a1.1,1.1 0 1,0 -2.2,0M1235.9,198.9a1.1,1.1 0 1,0 2.2,0a1.1,1.1 0 1,0 -2.2,0M1241.2,198.9a1.1,1.1 0 1,0 2.2,0a1.1,1.1 0 1,0 -2.2,0M1246.6,198.9a1.1,1.1 0 1,0 2.2,0a1.1,1.1 0 1,0 -2.2,0M1251.9,198.9a1.1,1.1 0 1,0 2.2,0a1.1,1.1 0 1,0 -2.2,0M1257.3,198.9a1.1,1.1 0 1,0 2.2,0a1.1,1.1 0 1,0 -2.2,0M1262.6,198.9a1.1,1.1 0 1,0 2.2,0a1.1,1.1 0 1,0 -2.2,0M1268,198.9a1.1,1.1 0 1,0 2.2,0a1.1,1.1 0 1,0 -2.2,0M1273.3,198.9a1.1,1.1 0 1,0 2.2,0a1.1,1.1 0 1,0 -2.2,0M1278.7,198.9a1.1,1.1 0 1,0 2.2,0a1.1,1.1 0 1,0 -2.2,0" fill="#fff" fill-opacity="0.6" stroke="#6F87D8" stroke-width="1"/><path d="M803.8,307.8 L809.1,307.8 L814.5,307.8 L819.8,307.8 L825.2,307.8 L830.5,307.8 L835.9,307.8 L841.2,307.8 L846.6,307.8 L851.9,307.8 L857.3,307.8 L862.6,307.8 L868,307.8 L873.3,307.8 L878.7,307.8 L884,307.8 L889.4,307.8 L894.7,307.8 L900.1,307.8 L905.4,307.8 L910.8,307.8 L916.1,307.8 L921.5,307.8 L926.8,307.8 L932.2,307.8 L937.5,307.8 L942.8,307.8 L948.2,307.8 L953.5,307.8 L958.9,307.8 L964.2,307.8 L969.6,307.8 L974.9,307.8 L980.3,307.8 L985.6,307.8 L991,307.8 L996.3,307.8 L1001.7,307.8 L1007,307.8 L1012.4,307.8 L1017.7,307.8 L1023.1,307.8 L1028.4,307.8 L1033.8,307.8 L1039.1,307.8 L1044.5,307.8 L1049.8,307.8 L1055.2,307.8 L1060.5,307.8 L1065.9,307.8 L1071.2,307.8 L1076.5,307.8 L1081.9,307.8 L1087.2,307.8 L1092.6,307.8 L1097.9,307.8 L1103.3,307.8 L1108.6,307.8 L1114,307.8 L1119.3,307.8 L1124.7,307.8 L1130,307.8 L1135.4,307.8 L1140.7,307.8 L1146.1,307.8 L1151.4,307.8 L1156.8,307.8 L1162.1,307.8 L1167.5,307.8 L1172.8,307.8 L1178.2,307.8 L1183.5,307.8 L1188.9,307.8 L1194.2,307.8 L1199.6,307.8 L1204.9,307.8 L1210.2,307.8 L1215.6,307.8 L1220.9,307.8 L1226.3,307.8 L1231.6,307.8 L1237,307.8 L1242.3,307.8 L1247.7,307.8 L1253,307.8 L1258.4,307.8 L1263.7,307.8 L1269.1,307.8 L1274.4,307.8 L1279.8,307.8 L1279.8,415.8 L1274.4,415.8 L1269.1,415.8 L1263.7,415.8 L1258.4,415.8 L1253,415.8 L1247.7,415.8 L1242.3,415.8 L1237,415.8 L1231.6,415.8 L1226.3,415.8 L1220.9,415.8 L1215.6,415.8 L1210.2,415.8 L1204.9,415.8 L1199.6,415.8 L1194.2,415.8 L1188.9,415.8 L1183.5,415.8 L1178.2,415.8 L1172.8,415.8 L1167.5,415.8 L1162.1,415.8 L1156.8,415.8 L1151.4,415.8 L1146.1,415.8 L1140.7,415.8 L1135.4,415.8 L1130,415.8 L1124.7,415.8 L1119.3,415.8 L1114,415.8 L1108.6,415.8 L1103.3,415.8 L1097.9,415.8 L1092.6,415.8 L1087.2,415.8 L1081.9,415.8 L1076.5,415.8 L1071.2,415.8 L1065.9,415.8 L1060.5,415.8 L1055.2,415.8 L1049.8,415.8 L1044.5,415.8 L1039.1,415.8 L1033.8,415.8 L1028.4,415.8 L1023.1,415.8 L1017.7,415.8 L1012.4,415.8 L1007,415.8 L1001.7,415.8 L996.3,415.8 L991,415.8 L985.6,415.8 L980.3,415.8 L974.9,415.8 L969.6,415.8 L964.2,415.8 L958.9,415.8 L953.5,415.8 L948.2,415.8 L942.8,415.8 L937.5,415.8 L932.2,415.8 L926.8,415.8 L921.5,415.8 L916.1,415.8 L910.8,415.8 L905.4,415.8 L900.1,415.8 L894.7,415.8 L889.4,415.8 L884,415.8 L878.7,415.8 L873.3,415.8 L868,415.8 L862.6,415.8 L857.3,415.8 L851.9,415.8 L846.6,415.8 L841.2,415.8 L835.9,415.8 L830.5,415.8 L825.2,415.8 L819.8,415.8 L814.5,415.8 L809.1,415.8 L803.8,415.8Z" fill="#57C17B" fill-opacity="0.5"/><path d="M803.8,307.8 L809.1,307.8 L814.5,307.8 L819.8,307.8 L825.2,307.8 L830.5,307.8 L835.9,307.8 L841.2,307.8 L846.6,307.8 L851.9,307.8 L857.3,307.8 L862.6,307.8 L868,307.8 L873.3,307.8 L878.7,307.8 L884,307.8 L889.4,307.8 L894.7,307.8 L900.1,307.8 L905.4,307.8 L910.8,307.8 L916.1,307.8 L921.5,307.8 L926.8,307.8 L932.2,307.8 L937.5,307.8 L942.8,307.8 L948.2,307.8 L953.5,307.8 L958.9,307.8 L964.2,307.8 L969.6,307.8 L974.9,307.8 L980.3,307.8 L985.6,307.8 L991,307.8 L996.3,307.8 L1001.7,307.8 L1007,307.8 L1012.4,307.8 L1017.7,307.8 L1023.1,307.8 L1028.4,307.8 L1033.8,307.8 L1039.1,307.8 L1044.5,307.8 L1049.8,307.8 L1055.2,307.8 L1060.5,307.8 L1065.9,307.8 L1071.2,307.8 L1076.5,307.8 L1081.9,307.8 L1087.2,307.8 L1092.6,307.8 L1097.9,307.8 L1103.3,307.8 L1108.6,307.8 L1114,307.8 L1119.3,307.8 L1124.7,307.8 L1130,307.8 L1135.4,307.8 L1140.7,307.8 L1146.1,307.8 L1151.4,307.8 L1156.8,307.8 L1162.1,307.8 L1167.5,307.8 L1172.8,307.8 L1178.2,307.8 L1183.5,307.8 L1188.9,307.8 L1194.2,307.8 L1199.6,307.8 L1204.9,307.8 L1210.2,307.8 L1215.6,307.8 L1220.9,307.8 L1226.3,307.8 L1231.6,307.8 L1237,307.8 L1242.3,307.8 L1247.7,307.8 L1253,307.8 L1258.4,307.8 L1263.7,307.8 L1269.1,307.8 L1274.4,307.8 L1279.8,307.8" fill="none" stroke="#57C17B" stroke-width="1" stroke-linejoin="round"/><path d="M802.7,307.8a1.1,1.1 0 1,0 2.2,0a1.1,1.1 0 1,0 -2.2,0M808,307.8a1.1,1.1 0 1,0 2.2,0a1.1,1.1 0 1,0 -2.2,0M813.4,307.8a1.1,1.1 0 1,0 2.2,0a1.1,1.1 0 1,0 -2.2,0M818.7,307.8a1.1,1.1 0 1,0 2.2,0a1.1,1.1 0 1,0 -2.2,0M824.1,307.8a1.1,1.1 0 1,0 2.2,0a1.1,1.1 0 1,0 -2.2,0M829.4,307.8a1.1,1.1 0 1,0 2.2,0a1.1,1.1 0 1,0 -2.2,0M834.8,307.8a1.1,1.1 0 1,0 2.2,0a1.1,1.1 0 1,0 -2.2,0M840.1,307.8a1.1,1.1 0 1,0 2.2,0a1.1,1.1 0 1,0 -2.2,0M845.5,307.8a1.1,1.1 0 1,0 2.2,0a1.1,1.1 0 1,0 -2.2,0M850.8,307.8a1.1,1.1 0 1,0 2.2,0a1.1,1.1 0 1,0 -2.2,0M856.2,307.8a1.1,1.1 0 1,0 2.2,0a1.1,1.1 0 1,0 -2.2,0M861.5,307.8a1.1,1.1 0 1,0 2.2,0a1.1,1.1 0 1,0 -2.2,0M866.9,307.8a1.1,1.1 0 1,0 2.2,0a1.1,1.1 0 1,0 -2.2,0M872.2,307.8a1.1,1.1 0 1,0 2.2,0a1.1,1.1 0 1,0 -2.2,0M877.6,307.8a1.1,1.1 0 1,0 2.2,0a1.1,1.1 0 1,0 -2.2,0M882.9,307.8a1.1,1.1 0 1,0 2.2,0a1.1,1.1 0 1,0 -2.2,0M888.3,307.8a1.1,1.1 0 1,0 2.2,0a1.1,1.1 0 1,0 -2.2,0M893.6,307.8a1.1,1.1 0 1,0 2.2,0a1.1,1.1 0 1,0 -2.2,0M899,307.8a1.1,1.1 0 1,0 2.2,0a1.1,1.1 0 1,0 -2.2,0M904.3,307.8a1.1,1.1 0 1,0 2.2,0a1.1,1.1 0 1,0 -2.2,0M909.7,307.8a1.1,1.1 0 1,0 2.2,0a1.1,1.1 0 1,0 -2.2,0M915,307.8a1.1,1.1 0 1,0 2.2,0a1.1,1.1 0 1,0 -2.2,0M920.4,307.8a1.1,1.1 0 1,0 2.2,0a1.1,1.1 0 1,0 -2.2,0M925.7,307.8a1.1,1.1 0 1,0 2.2,0a1.1,1.1 0 1,0 -2.2,0M931.1,307.8a1.1,1.1 0 1,0 2.2,0a1.1,1.1 0 1,0 -2.2,0M936.4,307.8a1.1,1.1 0 1,0 2.2,0a1.1,1.1 0 1,0 -2.2,0M941.7,307.8a1.1,1.1 0 1,0 2.2,0a1.1,1.1 0 1,0 -2.2,0M947.1,307.8a1.1,1.1 0 1,0 2.2,0a1.1,1.1 0 1,0 -2.2,0M952.4,307.8a1.1,1.1 0 1,0 2.2,0a1.1,1.1 0 1,0 -2.2,0M957.8,307.8a1.1,1.1 0 1,0 2.2,0a1.1,1.1 0 1,0 -2.2,0M963.1,307.8a1.1,1.1 0 1,0 2.2,0a1.1,1.1 0 1,0 -2.2,0M968.5,307.8a1.1,1.1 0 1,0 2.2,0a1.1,1.1 0 1,0 -2.2,0M973.8,307.8a1.1,1.1 0 1,0 2.2,0a1.1,1.1 0 1,0 -2.2,0M979.2,307.8a1.1,1.1 0 1,0 2.2,0a1.1,1.1 0 1,0 -2.2,0M984.5,307.8a1.1,1.1 0 1,0 2.2,0a1.1,1.1 0 1,0 -2.2,0M989.9,307.8a1.1,1.1 0 1,0 2.2,0a1.1,1.1 0 1,0 -2.2,0M995.2,307.8a1.1,1.1 0 1,0 2.2,0a1.1,1.1 0 1,0 -2.2,0M1000.6,307.8a1.1,1.1 0 1,0 2.2,0a1.1,1.1 0 1,0 -2.2,0M1005.9,307.8a1.1,1.1 0 1,0 2.2,0a1.1,1.1 0 1,0 -2.2,0M1011.3,307.8a1.1,1.1 0 1,0 2.2,0a1.1,1.1 0 1,0 -2.2,0M1016.6,307.8a1.1,1.1 0 1,0 2.2,0a1.1,1.1 0 1,0 -2.2,0M1022,307.8a1.1,1.1 0 1,0 2.2,0a1.1,1.1 0 1,0 -2.2,0M1027.3,307.8a1.1,1.1 0 1,0 2.2,0a1.1,1.1 0 1,0 -2.2,0M1032.7,307.8a1.1,1.1 0 1,0 2.2,0a1.1,1.1 0 1,0 -2.2,0M1038,307.8a1.1,1.1 0 1,0 2.2,0a1.1,1.1 0 1,0 -2.2,0M1043.4,307.8a1.1,1.1 0 1,0 2.2,0a1.1,1.1 0 1,0 -2.2,0M1048.7,307.8a1.1,1.1 0 1,0 2.2,0a1.1,1.1 0 1,0 -2.2,0M1054.1,307.8a1.1,1.1 0 1,0 2.2,0a1.1,1.1 0 1,0 -2.2,0M1059.4,307.8a1.1,1.1 0 1,0 2.2,0a1.1,1.1 0 1,0 -2.2,0M1064.8,307.8a1.1,1.1 0 1,0 2.2,0a1.1,1.1 0 1,0 -2.2,0M1070.1,307.8a1.1,1.1 0 1,0 2.2,0a1.1,1.1 0 1,0 -2.2,0M1075.4,307.8a1.1,1.1 0 1,0 2.2,0a1.1,1.1 0 1,0 -2.2,0M1080.8,307.8a1.1,1.1 0 1,0 2.2,0a1.1,1.1 0 1,0 -2.2,0M1086.1,307.8a1.1,1.1 0 1,0 2.2,0a1.1,1.1 0 1,0 -2.2,0M1091.5,307.8a1.1,1.1 0 1,0 2.2,0a1.1,1.1 0 1,0 -2.2,0M1096.8,307.8a1.1,1.1 0 1,0 2.2,0a1.1,1.1 0 1,0 -2.2,0M1102.2,307.8a1.1,1.1 0 1,0 2.2,0a1.1,1.1 0 1,0 -2.2,0M1107.5,307.8a1.1,1.1 0 1,0 2.2,0a1.1,1.1 0 1,0 -2.2,0M1112.9,307.8a1.1,1.1 0 1,0 2.2,0a1.1,1.1 0 1,0 -2.2,0M1118.2,307.8a1.1,1.1 0 1,0 2.2,0a1.1,1.1 0 1,0 -2.2,0M1123.6,307.8a1.1,1.1 0 1,0 2.2,0a1.1,1.1 0 1,0 -2.2,0M1128.9,307.8a1.1,1.1 0 1,0 2.2,0a1.1,1.1 0 1,0 -2.2,0M1134.3,307.8a1.1,1.1 0 1,0 2.2,0a1.1,1.1 0 1,0 -2.2,0M1139.6,307.8a1.1,1.1 0 1,0 2.2,0a1.1,1.1 0 1,0 -2.2,0M1145,307.8a1.1,1.1 0 1,0 2.2,0a1.1,1.1 0 1,0 -2.2,0M1150.3,307.8a1.1,1.1 0 1,0 2.2,0a1.1,1.1 0 1,0 -2.2,0M1155.7,307.8a1.1,1.1 0 1,0 2.2,0a1.1,1.1 0 1,0 -2.2,0M1161,307.8a1.1,1.1 0 1,0 2.2,0a1.1,1.1 0 1,0 -2.2,0M1166.4,307.8a1.1,1.1 0 1,0 2.2,0a1.1,1.1 0 1,0 -2.2,0M1171.7,307.8a1.1,1.1 0 1,0 2.2,0a1.1,1.1 0 1,0 -2.2,0M1177.1,307.8a1.1,1.1 0 1,0 2.2,0a1.1,1.1 0 1,0 -2.2,0M1182.4,307.8a1.1,1.1 0 1,0 2.2,0a1.1,1.1 0 1,0 -2.2,0M1187.8,307.8a1.1,1.1 0 1,0 2.2,0a1.1,1.1 0 1,0 -2.2,0M1193.1,307.8a1.1,1.1 0 1,0 2.2,0a1.1,1.1 0 1,0 -2.2,0M1198.5,307.8a1.1,1.1 0 1,0 2.2,0a1.1,1.1 0 1,0 -2.2,0M1203.8,307.8a1.1,1.1 0 1,0 2.2,0a1.1,1.1 0 1,0 -2.2,0M1209.1,307.8a1.1,1.1 0 1,0 2.2,0a1.1,1.1 0 1,0 -2.2,0M1214.5,307.8a1.1,1.1 0 1,0 2.2,0a1.1,1.1 0 1,0 -2.2,0M1219.8,307.8a1.1,1.1 0 1,0 2.2,0a1.1,1.1 0 1,0 -2.2,0M1225.2,307.8a1.1,1.1 0 1,0 2.2,0a1.1,1.1 0 1,0 -2.2,0M1230.5,307.8a1.1,1.1 0 1,0 2.2,0a1.1,1.1 0 1,0 -2.2,0M1235.9,307.8a1.1,1.1 0 1,0 2.2,0a1.1,1.1 0 1,0 -2.2,0M1241.2,307.8a1.1,1.1 0 1,0 2.2,0a1.1,1.1 0 1,0 -2.2,0M1246.6,307.8a1.1,1.1 0 1,0 2.2,0a1.1,1.1 0 1,0 -2.2,0M1251.9,307.8a1.1,1.1 0 1,0 2.2,0a1.1,1.1 0 1,0 -2.2,0M1257.3,307.8a1.1,1.1 0 1,0 2.2,0a1.1,1.1 0 1,0 -2.2,0M1262.6,307.8a1.1,1.1 0 1,0 2.2,0a1.1,1.1 0 1,0 -2.2,0M1268,307.8a1.1,1.1 0 1,0 2.2,0a1.1,1.1 0 1,0 -2.2,0M1273.3,307.8a1.1,1.1 0 1,0 2.2,0a1.1,1.1 0 1,0 -2.2,0M1278.7,307.8a1.1,1.1 0 1,0 2.2,0a1.1,1.1 0 1,0 -2.2,0" fill="#fff" fill-opacity="0.6" stroke="#57C17B" stroke-width="1"/><path d="M803.8,415.8 L809.1,415.8 L814.5,415.8 L819.8,415.8 L825.2,415.8 L830.5,415.8 L835.9,415.8 L841.2,415.8 L846.6,415.8 L851.9,415.8 L857.3,415.8 L862.6,415.8 L868,415.8 L873.3,415.8 L878.7,415.8 L884,415.8 L889.4,415.8 L894.7,415.8 L900.1,415.8 L905.4,415.8 L910.8,415.8 L916.1,415.8 L921.5,415.8 L926.8,415.8 L932.2,415.8 L937.5,415.8 L942.8,415.8 L948.2,415.8 L953.5,415.8 L958.9,415.8 L964.2,415.8 L969.6,415.8 L974.9,415.8 L980.3,415.8 L985.6,415.8 L991,415.8 L996.3,415.8 L1001.7,415.8 L1007,415.8 L1012.4,415.8 L1017.7,415.8 L1023.1,415.8 L1028.4,415.8 L1033.8,415.8 L1039.1,415.8 L1044.5,415.8 L1049.8,415.8 L1055.2,415.8 L1060.5,415.8 L1065.9,415.8 L1071.2,415.8 L1076.5,415.8 L1081.9,415.8 L1087.2,415.8 L1092.6,415.8 L1097.9,415.8 L1103.3,415.8 L1108.6,415.8 L1114,415.8 L1119.3,415.8 L1124.7,415.8 L1130,415.8 L1135.4,415.8 L1140.7,415.8 L1146.1,415.8 L1151.4,415.8 L1156.8,415.8 L1162.1,415.8 L1167.5,415.8 L1172.8,415.8 L1178.2,415.8 L1183.5,415.8 L1188.9,415.8 L1194.2,415.8 L1199.6,415.8 L1204.9,415.8 L1210.2,415.8 L1215.6,415.8 L1220.9,415.8 L1226.3,415.8 L1231.6,415.8 L1237,415.8 L1242.3,415.8 L1247.7,415.8 L1253,415.8 L1258.4,415.8 L1263.7,415.8 L1269.1,415.8 L1274.4,415.8 L1279.8,415.8 L1279.8,523.8 L1274.4,523.8 L1269.1,523.8 L1263.7,523.8 L1258.4,523.8 L1253,523.8 L1247.7,523.8 L1242.3,523.8 L1237,523.8 L1231.6,523.8 L1226.3,523.8 L1220.9,523.8 L1215.6,523.8 L1210.2,523.8 L1204.9,523.8 L1199.6,523.8 L1194.2,523.8 L1188.9,523.8 L1183.5,523.8 L1178.2,523.8 L1172.8,523.8 L1167.5,523.8 L1162.1,523.8 L1156.8,523.8 L1151.4,523.8 L1146.1,523.8 L1140.7,523.8 L1135.4,523.8 L1130,523.8 L1124.7,523.8 L1119.3,523.8 L1114,523.8 L1108.6,523.8 L1103.3,523.8 L1097.9,523.8 L1092.6,523.8 L1087.2,523.8 L1081.9,523.8 L1076.5,523.8 L1071.2,523.8 L1065.9,523.8 L1060.5,523.8 L1055.2,523.8 L1049.8,523.8 L1044.5,523.8 L1039.1,523.8 L1033.8,523.8 L1028.4,523.8 L1023.1,523.8 L1017.7,523.8 L1012.4,523.8 L1007,523.8 L1001.7,523.8 L996.3,523.8 L991,523.8 L985.6,523.8 L980.3,523.8 L974.9,523.8 L969.6,523.8 L964.2,523.8 L958.9,523.8 L953.5,523.8 L948.2,523.8 L942.8,523.8 L937.5,523.8 L932.2,523.8 L926.8,523.8 L921.5,523.8 L916.1,523.8 L910.8,523.8 L905.4,523.8 L900.1,523.8 L894.7,523.8 L889.4,523.8 L884,523.8 L878.7,523.8 L873.3,523.8 L868,523.8 L862.6,523.8 L857.3,523.8 L851.9,523.8 L846.6,523.8 L841.2,523.8 L835.9,523.8 L830.5,523.8 L825.2,523.8 L819.8,523.8 L814.5,523.8 L809.1,523.8 L803.8,523.8Z" fill="#00A69B" fill-opacity="0.5"/><path d="M803.8,415.8 L809.1,415.8 L814.5,415.8 L819.8,415.8 L825.2,415.8 L830.5,415.8 L835.9,415.8 L841.2,415.8 L846.6,415.8 L851.9,415.8 L857.3,415.8 L862.6,415.8 L868,415.8 L873.3,415.8 L878.7,415.8 L884,415.8 L889.4,415.8 L894.7,415.8 L900.1,415.8 L905.4,415.8 L910.8,415.8 L916.1,415.8 L921.5,415.8 L926.8,415.8 L932.2,415.8 L937.5,415.8 L942.8,415.8 L948.2,415.8 L953.5,415.8 L958.9,415.8 L964.2,415.8 L969.6,415.8 L974.9,415.8 L980.3,415.8 L985.6,415.8 L991,415.8 L996.3,415.8 L1001.7,415.8 L1007,415.8 L1012.4,415.8 L1017.7,415.8 L1023.1,415.8 L1028.4,415.8 L1033.8,415.8 L1039.1,415.8 L1044.5,415.8 L1049.8,415.8 L1055.2,415.8 L1060.5,415.8 L1065.9,415.8 L1071.2,415.8 L1076.5,415.8 L1081.9,415.8 L1087.2,415.8 L1092.6,415.8 L1097.9,415.8 L1103.3,415.8 L1108.6,415.8 L1114,415.8 L1119.3,415.8 L1124.7,415.8 L1130,415.8 L1135.4,415.8 L1140.7,415.8 L1146.1,415.8 L1151.4,415.8 L1156.8,415.8 L1162.1,415.8 L1167.5,415.8 L1172.8,415.8 L1178.2,415.8 L1183.5,415.8 L1188.9,415.8 L1194.2,415.8 L1199.6,415.8 L1204.9,415.8 L1210.2,415.8 L1215.6,415.8 L1220.9,415.8 L1226.3,415.8 L1231.6,415.8 L1237,415.8 L1242.3,415.8 L1247.7,415.8 L1253,415.8 L1258.4,415.8 L1263.7,415.8 L1269.1,415.8 L1274.4,415.8 L1279.8,415.8" fill="none" stroke="#00A69B" stroke-width="1" stroke-linejoin="round"/><path d="M802.7,415.8a1.1,1.1 0 1,0 2.2,0a1.1,1.1 0 1,0 -2.2,0M808,415.8a1.1,1.1 0 1,0 2.2,0a1.1,1.1 0 1,0 -2.2,0M813.4,415.8a1.1,1.1 0 1,0 2.2,0a1.1,1.1 0 1,0 -2.2,0M818.7,415.8a1.1,1.1 0 1,0 2.2,0a1.1,1.1 0 1,0 -2.2,0M824.1,415.8a1.1,1.1 0 1,0 2.2,0a1.1,1.1 0 1,0 -2.2,0M829.4,415.8a1.1,1.1 0 1,0 2.2,0a1.1,1.1 0 1,0 -2.2,0M834.8,415.8a1.1,1.1 0 1,0 2.2,0a1.1,1.1 0 1,0 -2.2,0M840.1,415.8a1.1,1.1 0 1,0 2.2,0a1.1,1.1 0 1,0 -2.2,0M845.5,415.8a1.1,1.1 0 1,0 2.2,0a1.1,1.1 0 1,0 -2.2,0M850.8,415.8a1.1,1.1 0 1,0 2.2,0a1.1,1.1 0 1,0 -2.2,0M856.2,415.8a1.1,1.1 0 1,0 2.2,0a1.1,1.1 0 1,0 -2.2,0M861.5,415.8a1.1,1.1 0 1,0 2.2,0a1.1,1.1 0 1,0 -2.2,0M866.9,415.8a1.1,1.1 0 1,0 2.2,0a1.1,1.1 0 1,0 -2.2,0M872.2,415.8a1.1,1.1 0 1,0 2.2,0a1.1,1.1 0 1,0 -2.2,0M877.6,415.8a1.1,1.1 0 1,0 2.2,0a1.1,1.1 0 1,0 -2.2,0M882.9,415.8a1.1,1.1 0 1,0 2.2,0a1.1,1.1 0 1,0 -2.2,0M888.3,415.8a1.1,1.1 0 1,0 2.2,0a1.1,1.1 0 1,0 -2.2,0M893.6,415.8a1.1,1.1 0 1,0 2.2,0a1.1,1.1 0 1,0 -2.2,0M899,415.8a1.1,1.1 0 1,0 2.2,0a1.1,1.1 0 1,0 -2.2,0M904.3,415.8a1.1,1.1 0 1,0 2.2,0a1.1,1.1 0 1,0 -2.2,0M909.7,415.8a1.1,1.1 0 1,0 2.2,0a1.1,1.1 0 1,0 -2.2,0M915,415.8a1.1,1.1 0 1,0 2.2,0a1.1,1.1 0 1,0 -2.2,0M920.4,415.8a1.1,1.1 0 1,0 2.2,0a1.1,1.1 0 1,0 -2.2,0M925.7,415.8a1.1,1.1 0 1,0 2.2,0a1.1,1.1 0 1,0 -2.2,0M931.1,415.8a1.1,1.1 0 1,0 2.2,0a1.1,1.1 0 1,0 -2.2,0M936.4,415.8a1.1,1.1 0 1,0 2.2,0a1.1,1.1 0 1,0 -2.2,0M941.7,415.8a1.1,1.1 0 1,0 2.2,0a1.1,1.1 0 1,0 -2.2,0M947.1,415.8a1.1,1.1 0 1,0 2.2,0a1.1,1.1 0 1,0 -2.2,0M952.4,415.8a1.1,1.1 0 1,0 2.2,0a1.1,1.1 0 1,0 -2.2,0M957.8,415.8a1.1,1.1 0 1,0 2.2,0a1.1,1.1 0 1,0 -2.2,0M963.1,415.8a1.1,1.1 0 1,0 2.2,0a1.1,1.1 0 1,0 -2.2,0M968.5,415.8a1.1,1.1 0 1,0 2.2,0a1.1,1.1 0 1,0 -2.2,0M973.8,415.8a1.1,1.1 0 1,0 2.2,0a1.1,1.1 0 1,0 -2.2,0M979.2,415.8a1.1,1.1 0 1,0 2.2,0a1.1,1.1 0 1,0 -2.2,0M984.5,415.8a1.1,1.1 0 1,0 2.2,0a1.1,1.1 0 1,0 -2.2,0M989.9,415.8a1.1,1.1 0 1,0 2.2,0a1.1,1.1 0 1,0 -2.2,0M995.2,415.8a1.1,1.1 0 1,0 2.2,0a1.1,1.1 0 1,0 -2.2,0M1000.6,415.8a1.1,1.1 0 1,0 2.2,0a1.1,1.1 0 1,0 -2.2,0M1005.9,415.8a1.1,1.1 0 1,0 2.2,0a1.1,1.1 0 1,0 -2.2,0M1011.3,415.8a1.1,1.1 0 1,0 2.2,0a1.1,1.1 0 1,0 -2.2,0M1016.6,415.8a1.1,1.1 0 1,0 2.2,0a1.1,1.1 0 1,0 -2.2,0M1022,415.8a1.1,1.1 0 1,0 2.2,0a1.1,1.1 0 1,0 -2.2,0M1027.3,415.8a1.1,1.1 0 1,0 2.2,0a1.1,1.1 0 1,0 -2.2,0M1032.7,415.8a1.1,1.1 0 1,0 2.2,0a1.1,1.1 0 1,0 -2.2,0M1038,415.8a1.1,1.1 0 1,0 2.2,0a1.1,1.1 0 1,0 -2.2,0M1043.4,415.8a1.1,1.1 0 1,0 2.2,0a1.1,1.1 0 1,0 -2.2,0M1048.7,415.8a1.1,1.1 0 1,0 2.2,0a1.1,1.1 0 1,0 -2.2,0M1054.1,415.8a1.1,1.1 0 1,0 2.2,0a1.1,1.1 0 1,0 -2.2,0M1059.4,415.8a1.1,1.1 0 1,0 2.2,0a1.1,1.1 0 1,0 -2.2,0M1064.8,415.8a1.1,1.1 0 1,0 2.2,0a1.1,1.1 0 1,0 -2.2,0M1070.1,415.8a1.1,1.1 0 1,0 2.2,0a1.1,1.1 0 1,0 -2.2,0M1075.4,415.8a1.1,1.1 0 1,0 2.2,0a1.1,1.1 0 1,0 -2.2,0M1080.8,415.8a1.1,1.1 0 1,0 2.2,0a1.1,1.1 0 1,0 -2.2,0M1086.1,415.8a1.1,1.1 0 1,0 2.2,0a1.1,1.1 0 1,0 -2.2,0M1091.5,415.8a1.1,1.1 0 1,0 2.2,0a1.1,1.1 0 1,0 -2.2,0M1096.8,415.8a1.1,1.1 0 1,0 2.2,0a1.1,1.1 0 1,0 -2.2,0M1102.2,415.8a1.1,1.1 0 1,0 2.2,0a1.1,1.1 0 1,0 -2.2,0M1107.5,415.8a1.1,1.1 0 1,0 2.2,0a1.1,1.1 0 1,0 -2.2,0M1112.9,415.8a1.1,1.1 0 1,0 2.2,0a1.1,1.1 0 1,0 -2.2,0M1118.2,415.8a1.1,1.1 0 1,0 2.2,0a1.1,1.1 0 1,0 -2.2,0M1123.6,415.8a1.1,1.1 0 1,0 2.2,0a1.1,1.1 0 1,0 -2.2,0M1128.9,415.8a1.1,1.1 0 1,0 2.2,0a1.1,1.1 0 1,0 -2.2,0M1134.3,415.8a1.1,1.1 0 1,0 2.2,0a1.1,1.1 0 1,0 -2.2,0M1139.6,415.8a1.1,1.1 0 1,0 2.2,0a1.1,1.1 0 1,0 -2.2,0M1145,415.8a1.1,1.1 0 1,0 2.2,0a1.1,1.1 0 1,0 -2.2,0M1150.3,415.8a1.1,1.1 0 1,0 2.2,0a1.1,1.1 0 1,0 -2.2,0M1155.7,415.8a1.1,1.1 0 1,0 2.2,0a1.1,1.1 0 1,0 -2.2,0M1161,415.8a1.1,1.1 0 1,0 2.2,0a1.1,1.1 0 1,0 -2.2,0M1166.4,415.8a1.1,1.1 0 1,0 2.2,0a1.1,1.1 0 1,0 -2.2,0M1171.7,415.8a1.1,1.1 0 1,0 2.2,0a1.1,1.1 0 1,0 -2.2,0M1177.1,415.8a1.1,1.1 0 1,0 2.2,0a1.1,1.1 0 1,0 -2.2,0M1182.4,415.8a1.1,1.1 0 1,0 2.2,0a1.1,1.1 0 1,0 -2.2,0M1187.8,415.8a1.1,1.1 0 1,0 2.2,0a1.1,1.1 0 1,0 -2.2,0M1193.1,415.8a1.1,1.1 0 1,0 2.2,0a1.1,1.1 0 1,0 -2.2,0M1198.5,415.8a1.1,1.1 0 1,0 2.2,0a1.1,1.1 0 1,0 -2.2,0M1203.8,415.8a1.1,1.1 0 1,0 2.2,0a1.1,1.1 0 1,0 -2.2,0M1209.1,415.8a1.1,1.1 0 1,0 2.2,0a1.1,1.1 0 1,0 -2.2,0M1214.5,415.8a1.1,1.1 0 1,0 2.2,0a1.1,1.1 0 1,0 -2.2,0M1219.8,415.8a1.1,1.1 0 1,0 2.2,0a1.1,1.1 0 1,0 -2.2,0M1225.2,415.8a1.1,1.1 0 1,0 2.2,0a1.1,1.1 0 1,0 -2.2,0M1230.5,415.8a1.1,1.1 0 1,0 2.2,0a1.1,1.1 0 1,0 -2.2,0M1235.9,415.8a1.1,1.1 0 1,0 2.2,0a1.1,1.1 0 1,0 -2.2,0M1241.2,415.8a1.1,1.1 0 1,0 2.2,0a1.1,1.1 0 1,0 -2.2,0M1246.6,415.8a1.1,1.1 0 1,0 2.2,0a1.1,1.1 0 1,0 -2.2,0M1251.9,415.8a1.1,1.1 0 1,0 2.2,0a1.1,1.1 0 1,0 -2.2,0M1257.3,415.8a1.1,1.1 0 1,0 2.2,0a1.1,1.1 0 1,0 -2.2,0M1262.6,415.8a1.1,1.1 0 1,0 2.2,0a1.1,1.1 0 1,0 -2.2,0M1268,415.8a1.1,1.1 0 1,0 2.2,0a1.1,1.1 0 1,0 -2.2,0M1273.3,415.8a1.1,1.1 0 1,0 2.2,0a1.1,1.1 0 1,0 -2.2,0M1278.7,415.8a1.1,1.1 0 1,0 2.2,0a1.1,1.1 0 1,0 -2.2,0" fill="#fff" fill-opacity="0.6" stroke="#00A69B" stroke-width="1"/><rect x="1284.8" y="495.5" width=".9" height="28" fill="url(#fade)"/><circle cx="1327" cy="207" r="4" fill="#6F87D8"/><text x="1339.2" y="211" class="lg">metricbeat</text><circle cx="1327" cy="229" r="4" fill="#57C17B"/><text x="1339.2" y="233" class="lg">filebeat</text><circle cx="1327" cy="251" r="4" fill="#00A69B"/><text x="1339.2" y="255" class="lg">elastic-agent</text><line x1="59" x2="569" y1="943.8" y2="943.8" stroke="#F2F2F2"/><line x1="49" x2="59" y1="943.8" y2="943.8" stroke="#EBEBEB"/><text x="39.2" y="947" text-anchor="end" class="tk">0</text><line x1="59" x2="569" y1="917.7" y2="917.7" stroke="#F2F2F2"/><line x1="49" x2="59" y1="917.7" y2="917.7" stroke="#EBEBEB"/><text x="39.2" y="920.9" text-anchor="end" class="tk">5</text><line x1="59" x2="569" y1="891.7" y2="891.7" stroke="#F2F2F2"/><line x1="49" x2="59" y1="891.7" y2="891.7" stroke="#EBEBEB"/><text x="39.2" y="894.9" text-anchor="end" class="tk">10</text><line x1="59" x2="569" y1="865.6" y2="865.6" stroke="#F2F2F2"/><line x1="49" x2="59" y1="865.6" y2="865.6" stroke="#EBEBEB"/><text x="39.2" y="868.8" text-anchor="end" class="tk">15</text><line x1="59" x2="569" y1="839.5" y2="839.5" stroke="#F2F2F2"/><line x1="49" x2="59" y1="839.5" y2="839.5" stroke="#EBEBEB"/><text x="39.2" y="842.7" text-anchor="end" class="tk">20</text><line x1="59" x2="569" y1="813.5" y2="813.5" stroke="#F2F2F2"/><line x1="49" x2="59" y1="813.5" y2="813.5" stroke="#EBEBEB"/><text x="39.2" y="816.7" text-anchor="end" class="tk">25</text><line x1="59" x2="569" y1="787.4" y2="787.4" stroke="#F2F2F2"/><line x1="49" x2="59" y1="787.4" y2="787.4" stroke="#EBEBEB"/><text x="39.2" y="790.6" text-anchor="end" class="tk">30</text><line x1="59" x2="569" y1="761.3" y2="761.3" stroke="#F2F2F2"/><line x1="49" x2="59" y1="761.3" y2="761.3" stroke="#EBEBEB"/><text x="39.2" y="764.5" text-anchor="end" class="tk">35</text><line x1="59" x2="569" y1="735.3" y2="735.3" stroke="#F2F2F2"/><line x1="49" x2="59" y1="735.3" y2="735.3" stroke="#EBEBEB"/><text x="39.2" y="738.5" text-anchor="end" class="tk">40</text><line x1="59" x2="569" y1="709.2" y2="709.2" stroke="#F2F2F2"/><line x1="49" x2="59" y1="709.2" y2="709.2" stroke="#EBEBEB"/><text x="39.2" y="712.4" text-anchor="end" class="tk">45</text><line x1="59" x2="569" y1="683.1" y2="683.1" stroke="#F2F2F2"/><line x1="49" x2="59" y1="683.1" y2="683.1" stroke="#EBEBEB"/><text x="39.2" y="686.4" text-anchor="end" class="tk">50</text><line x1="59" x2="569" y1="657.1" y2="657.1" stroke="#F2F2F2"/><line x1="49" x2="59" y1="657.1" y2="657.1" stroke="#EBEBEB"/><text x="39.2" y="660.3" text-anchor="end" class="tk">55</text><line x1="87.4" x2="87.4" y1="647" y2="943.8" stroke="#F2F2F2"/><line x1="87.4" x2="87.4" y1="943.8" y2="953.8" stroke="#EBEBEB"/><text x="87.4" y="972.3" text-anchor="middle" class="tk">10:07:00</text><line x1="155.4" x2="155.4" y1="647" y2="943.8" stroke="#F2F2F2"/><line x1="155.4" x2="155.4" y1="943.8" y2="953.8" stroke="#EBEBEB"/><text x="155.4" y="972.3" text-anchor="middle" class="tk">10:09:00</text><line x1="223.4" x2="223.4" y1="647" y2="943.8" stroke="#F2F2F2"/><line x1="223.4" x2="223.4" y1="943.8" y2="953.8" stroke="#EBEBEB"/><text x="223.4" y="972.3" text-anchor="middle" class="tk">10:11:00</text><line x1="291.4" x2="291.4" y1="647" y2="943.8" stroke="#F2F2F2"/><line x1="291.4" x2="291.4" y1="943.8" y2="953.8" stroke="#EBEBEB"/><text x="291.4" y="972.3" text-anchor="middle" class="tk">10:13:00</text><line x1="359.4" x2="359.4" y1="647" y2="943.8" stroke="#F2F2F2"/><line x1="359.4" x2="359.4" y1="943.8" y2="953.8" stroke="#EBEBEB"/><text x="359.4" y="972.3" text-anchor="middle" class="tk">10:15:00</text><line x1="427.4" x2="427.4" y1="647" y2="943.8" stroke="#F2F2F2"/><line x1="427.4" x2="427.4" y1="943.8" y2="953.8" stroke="#EBEBEB"/><text x="427.4" y="972.3" text-anchor="middle" class="tk">10:17:00</text><line x1="495.4" x2="495.4" y1="647" y2="943.8" stroke="#F2F2F2"/><line x1="495.4" x2="495.4" y1="943.8" y2="953.8" stroke="#EBEBEB"/><text x="495.4" y="972.3" text-anchor="middle" class="tk">10:19:00</text><line x1="563.4" x2="563.4" y1="647" y2="943.8" stroke="#F2F2F2"/><line x1="563.4" x2="563.4" y1="943.8" y2="953.8" stroke="#EBEBEB"/><text x="563.4" y="972.3" text-anchor="middle" class="tk">10:21:00</text><line x1="59" x2="59" y1="647" y2="943.8" stroke="#F2F2F2" stroke-width="1.8"/><text x="314" y="992" text-anchor="middle" class="ax">per 10 seconds</text><path d="M64.7,672.7 L70.4,672.7 L76,677.9 L81.7,677.9 L87.4,672.7 L93,672.7 L98.7,677.9 L104.4,667.5 L110,667.5 L115.7,672.7 L121.4,672.7 L127,677.9 L132.7,677.9 L138.4,672.7 L144,672.7 L149.7,672.7 L155.4,672.7 L161,672.7 L166.7,677.9 L172.4,677.9 L178,667.5 L183.7,672.7 L189.4,667.5 L195,672.7 L200.7,672.7 L206.4,677.9 L212,667.5 L217.7,667.5 L223.4,683.1 L229,672.7 L234.7,672.7 L240.4,672.7 L246,672.7 L251.7,667.5 L257.4,672.7 L263,672.7 L268.7,677.9 L274.4,667.5 L280,672.7 L285.7,677.9 L291.4,677.9 L297,667.5 L302.7,677.9 L308.4,677.9 L314,677.9 L319.7,672.7 L325.4,677.9 L331,667.5 L336.7,667.5 L342.4,672.7 L348,667.5 L353.7,672.7 L359.4,672.7 L365.1,667.5 L370.7,672.7 L376.4,672.7 L382.1,672.7 L387.7,672.7 L393.4,672.7 L399.1,667.5 L404.7,672.7 L410.4,677.9 L416.1,667.5 L421.7,672.7 L427.4,677.9 L433.1,662.3 L438.7,657.1 L444.4,646.7 L450.1,651.9 L455.7,657.1 L461.4,657.1 L467.1,657.1 L472.7,657.1 L478.4,662.3 L484.1,667.5 L489.7,662.3 L495.4,667.5 L501.1,662.3 L506.7,651.9 L512.4,662.3 L518.1,667.5 L523.7,662.3 L529.4,657.1 L535.1,657.1 L540.7,662.3 L546.4,667.5 L552.1,662.3 L557.7,657.1 L563.4,657.1 L563.4,750.9 L557.7,750.9 L552.1,750.9 L546.4,750.9 L540.7,750.9 L535.1,745.7 L529.4,745.7 L523.7,750.9 L518.1,750.9 L512.4,750.9 L506.7,745.7 L501.1,750.9 L495.4,750.9 L489.7,750.9 L484.1,750.9 L478.4,750.9 L472.7,750.9 L467.1,745.7 L461.4,745.7 L455.7,745.7 L450.1,740.5 L444.4,740.5 L438.7,745.7 L433.1,745.7 L427.4,761.3 L421.7,761.3 L416.1,761.3 L410.4,761.3 L404.7,761.3 L399.1,756.1 L393.4,761.3 L387.7,761.3 L382.1,761.3 L376.4,761.3 L370.7,761.3 L365.1,756.1 L359.4,761.3 L353.7,756.1 L348,756.1 L342.4,761.3 L336.7,756.1 L331,761.3 L325.4,761.3 L319.7,761.3 L314,761.3 L308.4,761.3 L302.7,761.3 L297,756.1 L291.4,761.3 L285.7,761.3 L280,761.3 L274.4,756.1 L268.7,761.3 L263,756.1 L257.4,761.3 L251.7,761.3 L246,761.3 L240.4,761.3 L234.7,761.3 L229,761.3 L223.4,761.3 L217.7,761.3 L212,761.3 L206.4,761.3 L200.7,761.3 L195,761.3 L189.4,761.3 L183.7,761.3 L178,756.1 L172.4,761.3 L166.7,761.3 L161,761.3 L155.4,761.3 L149.7,761.3 L144,761.3 L138.4,761.3 L132.7,761.3 L127,761.3 L121.4,761.3 L115.7,761.3 L110,756.1 L104.4,756.1 L98.7,761.3 L93,761.3 L87.4,761.3 L81.7,761.3 L76,761.3 L70.4,761.3 L64.7,761.3Z" fill="#6F87D8" fill-opacity="0.5"/><path d="M64.7,672.7 L70.4,672.7 L76,677.9 L81.7,677.9 L87.4,672.7 L93,672.7 L98.7,677.9 L104.4,667.5 L110,667.5 L115.7,672.7 L121.4,672.7 L127,677.9 L132.7,677.9 L138.4,672.7 L144,672.7 L149.7,672.7 L155.4,672.7 L161,672.7 L166.7,677.9 L172.4,677.9 L178,667.5 L183.7,672.7 L189.4,667.5 L195,672.7 L200.7,672.7 L206.4,677.9 L212,667.5 L217.7,667.5 L223.4,683.1 L229,672.7 L234.7,672.7 L240.4,672.7 L246,672.7 L251.7,667.5 L257.4,672.7 L263,672.7 L268.7,677.9 L274.4,667.5 L280,672.7 L285.7,677.9 L291.4,677.9 L297,667.5 L302.7,677.9 L308.4,677.9 L314,677.9 L319.7,672.7 L325.4,677.9 L331,667.5 L336.7,667.5 L342.4,672.7 L348,667.5 L353.7,672.7 L359.4,672.7 L365.1,667.5 L370.7,672.7 L376.4,672.7 L382.1,672.7 L387.7,672.7 L393.4,672.7 L399.1,667.5 L404.7,672.7 L410.4,677.9 L416.1,667.5 L421.7,672.7 L427.4,677.9 L433.1,662.3 L438.7,657.1 L444.4,646.7 L450.1,651.9 L455.7,657.1 L461.4,657.1 L467.1,657.1 L472.7,657.1 L478.4,662.3 L484.1,667.5 L489.7,662.3 L495.4,667.5 L501.1,662.3 L506.7,651.9 L512.4,662.3 L518.1,667.5 L523.7,662.3 L529.4,657.1 L535.1,657.1 L540.7,662.3 L546.4,667.5 L552.1,662.3 L557.7,657.1 L563.4,657.1" fill="none" stroke="#6F87D8" stroke-width="1" stroke-linejoin="round"/><path d="M63.6,672.7a1.1,1.1 0 1,0 2.2,0a1.1,1.1 0 1,0 -2.2,0M69.3,672.7a1.1,1.1 0 1,0 2.2,0a1.1,1.1 0 1,0 -2.2,0M74.9,677.9a1.1,1.1 0 1,0 2.2,0a1.1,1.1 0 1,0 -2.2,0M80.6,677.9a1.1,1.1 0 1,0 2.2,0a1.1,1.1 0 1,0 -2.2,0M86.3,672.7a1.1,1.1 0 1,0 2.2,0a1.1,1.1 0 1,0 -2.2,0M91.9,672.7a1.1,1.1 0 1,0 2.2,0a1.1,1.1 0 1,0 -2.2,0M97.6,677.9a1.1,1.1 0 1,0 2.2,0a1.1,1.1 0 1,0 -2.2,0M103.3,667.5a1.1,1.1 0 1,0 2.2,0a1.1,1.1 0 1,0 -2.2,0M108.9,667.5a1.1,1.1 0 1,0 2.2,0a1.1,1.1 0 1,0 -2.2,0M114.6,672.7a1.1,1.1 0 1,0 2.2,0a1.1,1.1 0 1,0 -2.2,0M120.3,672.7a1.1,1.1 0 1,0 2.2,0a1.1,1.1 0 1,0 -2.2,0M125.9,677.9a1.1,1.1 0 1,0 2.2,0a1.1,1.1 0 1,0 -2.2,0M131.6,677.9a1.1,1.1 0 1,0 2.2,0a1.1,1.1 0 1,0 -2.2,0M137.3,672.7a1.1,1.1 0 1,0 2.2,0a1.1,1.1 0 1,0 -2.2,0M142.9,672.7a1.1,1.1 0 1,0 2.2,0a1.1,1.1 0 1,0 -2.2,0M148.6,672.7a1.1,1.1 0 1,0 2.2,0a1.1,1.1 0 1,0 -2.2,0M154.3,672.7a1.1,1.1 0 1,0 2.2,0a1.1,1.1 0 1,0 -2.2,0M159.9,672.7a1.1,1.1 0 1,0 2.2,0a1.1,1.1 0 1,0 -2.2,0M165.6,677.9a1.1,1.1 0 1,0 2.2,0a1.1,1.1 0 1,0 -2.2,0M171.3,677.9a1.1,1.1 0 1,0 2.2,0a1.1,1.1 0 1,0 -2.2,0M176.9,667.5a1.1,1.1 0 1,0 2.2,0a1.1,1.1 0 1,0 -2.2,0M182.6,672.7a1.1,1.1 0 1,0 2.2,0a1.1,1.1 0 1,0 -2.2,0M188.3,667.5a1.1,1.1 0 1,0 2.2,0a1.1,1.1 0 1,0 -2.2,0M193.9,672.7a1.1,1.1 0 1,0 2.2,0a1.1,1.1 0 1,0 -2.2,0M199.6,672.7a1.1,1.1 0 1,0 2.2,0a1.1,1.1 0 1,0 -2.2,0M205.3,677.9a1.1,1.1 0 1,0 2.2,0a1.1,1.1 0 1,0 -2.2,0M210.9,667.5a1.1,1.1 0 1,0 2.2,0a1.1,1.1 0 1,0 -2.2,0M216.6,667.5a1.1,1.1 0 1,0 2.2,0a1.1,1.1 0 1,0 -2.2,0M222.3,683.1a1.1,1.1 0 1,0 2.2,0a1.1,1.1 0 1,0 -2.2,0M227.9,672.7a1.1,1.1 0 1,0 2.2,0a1.1,1.1 0 1,0 -2.2,0M233.6,672.7a1.1,1.1 0 1,0 2.2,0a1.1,1.1 0 1,0 -2.2,0M239.3,672.7a1.1,1.1 0 1,0 2.2,0a1.1,1.1 0 1,0 -2.2,0M244.9,672.7a1.1,1.1 0 1,0 2.2,0a1.1,1.1 0 1,0 -2.2,0M250.6,667.5a1.1,1.1 0 1,0 2.2,0a1.1,1.1 0 1,0 -2.2,0M256.3,672.7a1.1,1.1 0 1,0 2.2,0a1.1,1.1 0 1,0 -2.2,0M261.9,672.7a1.1,1.1 0 1,0 2.2,0a1.1,1.1 0 1,0 -2.2,0M267.6,677.9a1.1,1.1 0 1,0 2.2,0a1.1,1.1 0 1,0 -2.2,0M273.3,667.5a1.1,1.1 0 1,0 2.2,0a1.1,1.1 0 1,0 -2.2,0M278.9,672.7a1.1,1.1 0 1,0 2.2,0a1.1,1.1 0 1,0 -2.2,0M284.6,677.9a1.1,1.1 0 1,0 2.2,0a1.1,1.1 0 1,0 -2.2,0M290.3,677.9a1.1,1.1 0 1,0 2.2,0a1.1,1.1 0 1,0 -2.2,0M295.9,667.5a1.1,1.1 0 1,0 2.2,0a1.1,1.1 0 1,0 -2.2,0M301.6,677.9a1.1,1.1 0 1,0 2.2,0a1.1,1.1 0 1,0 -2.2,0M307.3,677.9a1.1,1.1 0 1,0 2.2,0a1.1,1.1 0 1,0 -2.2,0M312.9,677.9a1.1,1.1 0 1,0 2.2,0a1.1,1.1 0 1,0 -2.2,0M318.6,672.7a1.1,1.1 0 1,0 2.2,0a1.1,1.1 0 1,0 -2.2,0M324.3,677.9a1.1,1.1 0 1,0 2.2,0a1.1,1.1 0 1,0 -2.2,0M329.9,667.5a1.1,1.1 0 1,0 2.2,0a1.1,1.1 0 1,0 -2.2,0M335.6,667.5a1.1,1.1 0 1,0 2.2,0a1.1,1.1 0 1,0 -2.2,0M341.3,672.7a1.1,1.1 0 1,0 2.2,0a1.1,1.1 0 1,0 -2.2,0M346.9,667.5a1.1,1.1 0 1,0 2.2,0a1.1,1.1 0 1,0 -2.2,0M352.6,672.7a1.1,1.1 0 1,0 2.2,0a1.1,1.1 0 1,0 -2.2,0M358.3,672.7a1.1,1.1 0 1,0 2.2,0a1.1,1.1 0 1,0 -2.2,0M364,667.5a1.1,1.1 0 1,0 2.2,0a1.1,1.1 0 1,0 -2.2,0M369.6,672.7a1.1,1.1 0 1,0 2.2,0a1.1,1.1 0 1,0 -2.2,0M375.3,672.7a1.1,1.1 0 1,0 2.2,0a1.1,1.1 0 1,0 -2.2,0M381,672.7a1.1,1.1 0 1,0 2.2,0a1.1,1.1 0 1,0 -2.2,0M386.6,672.7a1.1,1.1 0 1,0 2.2,0a1.1,1.1 0 1,0 -2.2,0M392.3,672.7a1.1,1.1 0 1,0 2.2,0a1.1,1.1 0 1,0 -2.2,0M398,667.5a1.1,1.1 0 1,0 2.2,0a1.1,1.1 0 1,0 -2.2,0M403.6,672.7a1.1,1.1 0 1,0 2.2,0a1.1,1.1 0 1,0 -2.2,0M409.3,677.9a1.1,1.1 0 1,0 2.2,0a1.1,1.1 0 1,0 -2.2,0M415,667.5a1.1,1.1 0 1,0 2.2,0a1.1,1.1 0 1,0 -2.2,0M420.6,672.7a1.1,1.1 0 1,0 2.2,0a1.1,1.1 0 1,0 -2.2,0M426.3,677.9a1.1,1.1 0 1,0 2.2,0a1.1,1.1 0 1,0 -2.2,0M432,662.3a1.1,1.1 0 1,0 2.2,0a1.1,1.1 0 1,0 -2.2,0M437.6,657.1a1.1,1.1 0 1,0 2.2,0a1.1,1.1 0 1,0 -2.2,0M443.3,646.7a1.1,1.1 0 1,0 2.2,0a1.1,1.1 0 1,0 -2.2,0M449,651.9a1.1,1.1 0 1,0 2.2,0a1.1,1.1 0 1,0 -2.2,0M454.6,657.1a1.1,1.1 0 1,0 2.2,0a1.1,1.1 0 1,0 -2.2,0M460.3,657.1a1.1,1.1 0 1,0 2.2,0a1.1,1.1 0 1,0 -2.2,0M466,657.1a1.1,1.1 0 1,0 2.2,0a1.1,1.1 0 1,0 -2.2,0M471.6,657.1a1.1,1.1 0 1,0 2.2,0a1.1,1.1 0 1,0 -2.2,0M477.3,662.3a1.1,1.1 0 1,0 2.2,0a1.1,1.1 0 1,0 -2.2,0M483,667.5a1.1,1.1 0 1,0 2.2,0a1.1,1.1 0 1,0 -2.2,0M488.6,662.3a1.1,1.1 0 1,0 2.2,0a1.1,1.1 0 1,0 -2.2,0M494.3,667.5a1.1,1.1 0 1,0 2.2,0a1.1,1.1 0 1,0 -2.2,0M500,662.3a1.1,1.1 0 1,0 2.2,0a1.1,1.1 0 1,0 -2.2,0M505.6,651.9a1.1,1.1 0 1,0 2.2,0a1.1,1.1 0 1,0 -2.2,0M511.3,662.3a1.1,1.1 0 1,0 2.2,0a1.1,1.1 0 1,0 -2.2,0M517,667.5a1.1,1.1 0 1,0 2.2,0a1.1,1.1 0 1,0 -2.2,0M522.6,662.3a1.1,1.1 0 1,0 2.2,0a1.1,1.1 0 1,0 -2.2,0M528.3,657.1a1.1,1.1 0 1,0 2.2,0a1.1,1.1 0 1,0 -2.2,0M534,657.1a1.1,1.1 0 1,0 2.2,0a1.1,1.1 0 1,0 -2.2,0M539.6,662.3a1.1,1.1 0 1,0 2.2,0a1.1,1.1 0 1,0 -2.2,0M545.3,667.5a1.1,1.1 0 1,0 2.2,0a1.1,1.1 0 1,0 -2.2,0M551,662.3a1.1,1.1 0 1,0 2.2,0a1.1,1.1 0 1,0 -2.2,0M556.6,657.1a1.1,1.1 0 1,0 2.2,0a1.1,1.1 0 1,0 -2.2,0M562.3,657.1a1.1,1.1 0 1,0 2.2,0a1.1,1.1 0 1,0 -2.2,0" fill="#fff" fill-opacity="0.6" stroke="#6F87D8" stroke-width="1"/><path d="M64.7,761.3 L70.4,761.3 L76,761.3 L81.7,761.3 L87.4,761.3 L93,761.3 L98.7,761.3 L104.4,756.1 L110,756.1 L115.7,761.3 L121.4,761.3 L127,761.3 L132.7,761.3 L138.4,761.3 L144,761.3 L149.7,761.3 L155.4,761.3 L161,761.3 L166.7,761.3 L172.4,761.3 L178,756.1 L183.7,761.3 L189.4,761.3 L195,761.3 L200.7,761.3 L206.4,761.3 L212,761.3 L217.7,761.3 L223.4,761.3 L229,761.3 L234.7,761.3 L240.4,761.3 L246,761.3 L251.7,761.3 L257.4,761.3 L263,756.1 L268.7,761.3 L274.4,756.1 L280,761.3 L285.7,761.3 L291.4,761.3 L297,756.1 L302.7,761.3 L308.4,761.3 L314,761.3 L319.7,761.3 L325.4,761.3 L331,761.3 L336.7,756.1 L342.4,761.3 L348,756.1 L353.7,756.1 L359.4,761.3 L365.1,756.1 L370.7,761.3 L376.4,761.3 L382.1,761.3 L387.7,761.3 L393.4,761.3 L399.1,756.1 L404.7,761.3 L410.4,761.3 L416.1,761.3 L421.7,761.3 L427.4,761.3 L433.1,745.7 L438.7,745.7 L444.4,740.5 L450.1,740.5 L455.7,745.7 L461.4,745.7 L467.1,745.7 L472.7,750.9 L478.4,750.9 L484.1,750.9 L489.7,750.9 L495.4,750.9 L501.1,750.9 L506.7,745.7 L512.4,750.9 L518.1,750.9 L523.7,750.9 L529.4,745.7 L535.1,745.7 L540.7,750.9 L546.4,750.9 L552.1,750.9 L557.7,750.9 L563.4,750.9 L563.4,844.8 L557.7,844.8 L552.1,844.8 L546.4,844.8 L540.7,844.8 L535.1,844.8 L529.4,844.8 L523.7,844.8 L518.1,844.8 L512.4,844.8 L506.7,844.8 L501.1,844.8 L495.4,844.8 L489.7,844.8 L484.1,844.8 L478.4,844.8 L472.7,844.8 L467.1,844.8 L461.4,844.8 L455.7,844.8 L450.1,844.8 L444.4,844.8 L438.7,844.8 L433.1,844.8 L427.4,844.8 L421.7,844.8 L416.1,844.8 L410.4,844.8 L404.7,844.8 L399.1,844.8 L393.4,844.8 L387.7,844.8 L382.1,844.8 L376.4,844.8 L370.7,844.8 L365.1,844.8 L359.4,844.8 L353.7,844.8 L348,844.8 L342.4,844.8 L336.7,844.8 L331,844.8 L325.4,844.8 L319.7,844.8 L314,844.8 L308.4,844.8 L302.7,844.8 L297,844.8 L291.4,844.8 L285.7,844.8 L280,844.8 L274.4,844.8 L268.7,844.8 L263,844.8 L257.4,844.8 L251.7,844.8 L246,844.8 L240.4,844.8 L234.7,844.8 L229,844.8 L223.4,844.8 L217.7,844.8 L212,844.8 L206.4,844.8 L200.7,844.8 L195,844.8 L189.4,844.8 L183.7,844.8 L178,844.8 L172.4,844.8 L166.7,844.8 L161,844.8 L155.4,844.8 L149.7,844.8 L144,844.8 L138.4,844.8 L132.7,844.8 L127,844.8 L121.4,844.8 L115.7,844.8 L110,844.8 L104.4,844.8 L98.7,844.8 L93,844.8 L87.4,844.8 L81.7,844.8 L76,844.8 L70.4,844.8 L64.7,844.8Z" fill="#57C17B" fill-opacity="0.5"/><path d="M64.7,761.3 L70.4,761.3 L76,761.3 L81.7,761.3 L87.4,761.3 L93,761.3 L98.7,761.3 L104.4,756.1 L110,756.1 L115.7,761.3 L121.4,761.3 L127,761.3 L132.7,761.3 L138.4,761.3 L144,761.3 L149.7,761.3 L155.4,761.3 L161,761.3 L166.7,761.3 L172.4,761.3 L178,756.1 L183.7,761.3 L189.4,761.3 L195,761.3 L200.7,761.3 L206.4,761.3 L212,761.3 L217.7,761.3 L223.4,761.3 L229,761.3 L234.7,761.3 L240.4,761.3 L246,761.3 L251.7,761.3 L257.4,761.3 L263,756.1 L268.7,761.3 L274.4,756.1 L280,761.3 L285.7,761.3 L291.4,761.3 L297,756.1 L302.7,761.3 L308.4,761.3 L314,761.3 L319.7,761.3 L325.4,761.3 L331,761.3 L336.7,756.1 L342.4,761.3 L348,756.1 L353.7,756.1 L359.4,761.3 L365.1,756.1 L370.7,761.3 L376.4,761.3 L382.1,761.3 L387.7,761.3 L393.4,761.3 L399.1,756.1 L404.7,761.3 L410.4,761.3 L416.1,761.3 L421.7,761.3 L427.4,761.3 L433.1,745.7 L438.7,745.7 L444.4,740.5 L450.1,740.5 L455.7,745.7 L461.4,745.7 L467.1,745.7 L472.7,750.9 L478.4,750.9 L484.1,750.9 L489.7,750.9 L495.4,750.9 L501.1,750.9 L506.7,745.7 L512.4,750.9 L518.1,750.9 L523.7,750.9 L529.4,745.7 L535.1,745.7 L540.7,750.9 L546.4,750.9 L552.1,750.9 L557.7,750.9 L563.4,750.9" fill="none" stroke="#57C17B" stroke-width="1" stroke-linejoin="round"/><path d="M63.6,761.3a1.1,1.1 0 1,0 2.2,0a1.1,1.1 0 1,0 -2.2,0M69.3,761.3a1.1,1.1 0 1,0 2.2,0a1.1,1.1 0 1,0 -2.2,0M74.9,761.3a1.1,1.1 0 1,0 2.2,0a1.1,1.1 0 1,0 -2.2,0M80.6,761.3a1.1,1.1 0 1,0 2.2,0a1.1,1.1 0 1,0 -2.2,0M86.3,761.3a1.1,1.1 0 1,0 2.2,0a1.1,1.1 0 1,0 -2.2,0M91.9,761.3a1.1,1.1 0 1,0 2.2,0a1.1,1.1 0 1,0 -2.2,0M97.6,761.3a1.1,1.1 0 1,0 2.2,0a1.1,1.1 0 1,0 -2.2,0M103.3,756.1a1.1,1.1 0 1,0 2.2,0a1.1,1.1 0 1,0 -2.2,0M108.9,756.1a1.1,1.1 0 1,0 2.2,0a1.1,1.1 0 1,0 -2.2,0M114.6,761.3a1.1,1.1 0 1,0 2.2,0a1.1,1.1 0 1,0 -2.2,0M120.3,761.3a1.1,1.1 0 1,0 2.2,0a1.1,1.1 0 1,0 -2.2,0M125.9,761.3a1.1,1.1 0 1,0 2.2,0a1.1,1.1 0 1,0 -2.2,0M131.6,761.3a1.1,1.1 0 1,0 2.2,0a1.1,1.1 0 1,0 -2.2,0M137.3,761.3a1.1,1.1 0 1,0 2.2,0a1.1,1.1 0 1,0 -2.2,0M142.9,761.3a1.1,1.1 0 1,0 2.2,0a1.1,1.1 0 1,0 -2.2,0M148.6,761.3a1.1,1.1 0 1,0 2.2,0a1.1,1.1 0 1,0 -2.2,0M154.3,761.3a1.1,1.1 0 1,0 2.2,0a1.1,1.1 0 1,0 -2.2,0M159.9,761.3a1.1,1.1 0 1,0 2.2,0a1.1,1.1 0 1,0 -2.2,0M165.6,761.3a1.1,1.1 0 1,0 2.2,0a1.1,1.1 0 1,0 -2.2,0M171.3,761.3a1.1,1.1 0 1,0 2.2,0a1.1,1.1 0 1,0 -2.2,0M176.9,756.1a1.1,1.1 0 1,0 2.2,0a1.1,1.1 0 1,0 -2.2,0M182.6,761.3a1.1,1.1 0 1,0 2.2,0a1.1,1.1 0 1,0 -2.2,0M188.3,761.3a1.1,1.1 0 1,0 2.2,0a1.1,1.1 0 1,0 -2.2,0M193.9,761.3a1.1,1.1 0 1,0 2.2,0a1.1,1.1 0 1,0 -2.2,0M199.6,761.3a1.1,1.1 0 1,0 2.2,0a1.1,1.1 0 1,0 -2.2,0M205.3,761.3a1.1,1.1 0 1,0 2.2,0a1.1,1.1 0 1,0 -2.2,0M210.9,761.3a1.1,1.1 0 1,0 2.2,0a1.1,1.1 0 1,0 -2.2,0M216.6,761.3a1.1,1.1 0 1,0 2.2,0a1.1,1.1 0 1,0 -2.2,0M222.3,761.3a1.1,1.1 0 1,0 2.2,0a1.1,1.1 0 1,0 -2.2,0M227.9,761.3a1.1,1.1 0 1,0 2.2,0a1.1,1.1 0 1,0 -2.2,0M233.6,761.3a1.1,1.1 0 1,0 2.2,0a1.1,1.1 0 1,0 -2.2,0M239.3,761.3a1.1,1.1 0 1,0 2.2,0a1.1,1.1 0 1,0 -2.2,0M244.9,761.3a1.1,1.1 0 1,0 2.2,0a1.1,1.1 0 1,0 -2.2,0M250.6,761.3a1.1,1.1 0 1,0 2.2,0a1.1,1.1 0 1,0 -2.2,0M256.3,761.3a1.1,1.1 0 1,0 2.2,0a1.1,1.1 0 1,0 -2.2,0M261.9,756.1a1.1,1.1 0 1,0 2.2,0a1.1,1.1 0 1,0 -2.2,0M267.6,761.3a1.1,1.1 0 1,0 2.2,0a1.1,1.1 0 1,0 -2.2,0M273.3,756.1a1.1,1.1 0 1,0 2.2,0a1.1,1.1 0 1,0 -2.2,0M278.9,761.3a1.1,1.1 0 1,0 2.2,0a1.1,1.1 0 1,0 -2.2,0M284.6,761.3a1.1,1.1 0 1,0 2.2,0a1.1,1.1 0 1,0 -2.2,0M290.3,761.3a1.1,1.1 0 1,0 2.2,0a1.1,1.1 0 1,0 -2.2,0M295.9,756.1a1.1,1.1 0 1,0 2.2,0a1.1,1.1 0 1,0 -2.2,0M301.6,761.3a1.1,1.1 0 1,0 2.2,0a1.1,1.1 0 1,0 -2.2,0M307.3,761.3a1.1,1.1 0 1,0 2.2,0a1.1,1.1 0 1,0 -2.2,0M312.9,761.3a1.1,1.1 0 1,0 2.2,0a1.1,1.1 0 1,0 -2.2,0M318.6,761.3a1.1,1.1 0 1,0 2.2,0a1.1,1.1 0 1,0 -2.2,0M324.3,761.3a1.1,1.1 0 1,0 2.2,0a1.1,1.1 0 1,0 -2.2,0M329.9,761.3a1.1,1.1 0 1,0 2.2,0a1.1,1.1 0 1,0 -2.2,0M335.6,756.1a1.1,1.1 0 1,0 2.2,0a1.1,1.1 0 1,0 -2.2,0M341.3,761.3a1.1,1.1 0 1,0 2.2,0a1.1,1.1 0 1,0 -2.2,0M346.9,756.1a1.1,1.1 0 1,0 2.2,0a1.1,1.1 0 1,0 -2.2,0M352.6,756.1a1.1,1.1 0 1,0 2.2,0a1.1,1.1 0 1,0 -2.2,0M358.3,761.3a1.1,1.1 0 1,0 2.2,0a1.1,1.1 0 1,0 -2.2,0M364,756.1a1.1,1.1 0 1,0 2.2,0a1.1,1.1 0 1,0 -2.2,0M369.6,761.3a1.1,1.1 0 1,0 2.2,0a1.1,1.1 0 1,0 -2.2,0M375.3,761.3a1.1,1.1 0 1,0 2.2,0a1.1,1.1 0 1,0 -2.2,0M381,761.3a1.1,1.1 0 1,0 2.2,0a1.1,1.1 0 1,0 -2.2,0M386.6,761.3a1.1,1.1 0 1,0 2.2,0a1.1,1.1 0 1,0 -2.2,0M392.3,761.3a1.1,1.1 0 1,0 2.2,0a1.1,1.1 0 1,0 -2.2,0M398,756.1a1.1,1.1 0 1,0 2.2,0a1.1,1.1 0 1,0 -2.2,0M403.6,761.3a1.1,1.1 0 1,0 2.2,0a1.1,1.1 0 1,0 -2.2,0M409.3,761.3a1.1,1.1 0 1,0 2.2,0a1.1,1.1 0 1,0 -2.2,0M415,761.3a1.1,1.1 0 1,0 2.2,0a1.1,1.1 0 1,0 -2.2,0M420.6,761.3a1.1,1.1 0 1,0 2.2,0a1.1,1.1 0 1,0 -2.2,0M426.3,761.3a1.1,1.1 0 1,0 2.2,0a1.1,1.1 0 1,0 -2.2,0M432,745.7a1.1,1.1 0 1,0 2.2,0a1.1,1.1 0 1,0 -2.2,0M437.6,745.7a1.1,1.1 0 1,0 2.2,0a1.1,1.1 0 1,0 -2.2,0M443.3,740.5a1.1,1.1 0 1,0 2.2,0a1.1,1.1 0 1,0 -2.2,0M449,740.5a1.1,1.1 0 1,0 2.2,0a1.1,1.1 0 1,0 -2.2,0M454.6,745.7a1.1,1.1 0 1,0 2.2,0a1.1,1.1 0 1,0 -2.2,0M460.3,745.7a1.1,1.1 0 1,0 2.2,0a1.1,1.1 0 1,0 -2.2,0M466,745.7a1.1,1.1 0 1,0 2.2,0a1.1,1.1 0 1,0 -2.2,0M471.6,750.9a1.1,1.1 0 1,0 2.2,0a1.1,1.1 0 1,0 -2.2,0M477.3,750.9a1.1,1.1 0 1,0 2.2,0a1.1,1.1 0 1,0 -2.2,0M483,750.9a1.1,1.1 0 1,0 2.2,0a1.1,1.1 0 1,0 -2.2,0M488.6,750.9a1.1,1.1 0 1,0 2.2,0a1.1,1.1 0 1,0 -2.2,0M494.3,750.9a1.1,1.1 0 1,0 2.2,0a1.1,1.1 0 1,0 -2.2,0M500,750.9a1.1,1.1 0 1,0 2.2,0a1.1,1.1 0 1,0 -2.2,0M505.6,745.7a1.1,1.1 0 1,0 2.2,0a1.1,1.1 0 1,0 -2.2,0M511.3,750.9a1.1,1.1 0 1,0 2.2,0a1.1,1.1 0 1,0 -2.2,0M517,750.9a1.1,1.1 0 1,0 2.2,0a1.1,1.1 0 1,0 -2.2,0M522.6,750.9a1.1,1.1 0 1,0 2.2,0a1.1,1.1 0 1,0 -2.2,0M528.3,745.7a1.1,1.1 0 1,0 2.2,0a1.1,1.1 0 1,0 -2.2,0M534,745.7a1.1,1.1 0 1,0 2.2,0a1.1,1.1 0 1,0 -2.2,0M539.6,750.9a1.1,1.1 0 1,0 2.2,0a1.1,1.1 0 1,0 -2.2,0M545.3,750.9a1.1,1.1 0 1,0 2.2,0a1.1,1.1 0 1,0 -2.2,0M551,750.9a1.1,1.1 0 1,0 2.2,0a1.1,1.1 0 1,0 -2.2,0M556.6,750.9a1.1,1.1 0 1,0 2.2,0a1.1,1.1 0 1,0 -2.2,0M562.3,750.9a1.1,1.1 0 1,0 2.2,0a1.1,1.1 0 1,0 -2.2,0" fill="#fff" fill-opacity="0.6" stroke="#57C17B" stroke-width="1"/><path d="M64.7,844.8 L70.4,844.8 L76,844.8 L81.7,844.8 L87.4,844.8 L93,844.8 L98.7,844.8 L104.4,844.8 L110,844.8 L115.7,844.8 L121.4,844.8 L127,844.8 L132.7,844.8 L138.4,844.8 L144,844.8 L149.7,844.8 L155.4,844.8 L161,844.8 L166.7,844.8 L172.4,844.8 L178,844.8 L183.7,844.8 L189.4,844.8 L195,844.8 L200.7,844.8 L206.4,844.8 L212,844.8 L217.7,844.8 L223.4,844.8 L229,844.8 L234.7,844.8 L240.4,844.8 L246,844.8 L251.7,844.8 L257.4,844.8 L263,844.8 L268.7,844.8 L274.4,844.8 L280,844.8 L285.7,844.8 L291.4,844.8 L297,844.8 L302.7,844.8 L308.4,844.8 L314,844.8 L319.7,844.8 L325.4,844.8 L331,844.8 L336.7,844.8 L342.4,844.8 L348,844.8 L353.7,844.8 L359.4,844.8 L365.1,844.8 L370.7,844.8 L376.4,844.8 L382.1,844.8 L387.7,844.8 L393.4,844.8 L399.1,844.8 L404.7,844.8 L410.4,844.8 L416.1,844.8 L421.7,844.8 L427.4,844.8 L433.1,844.8 L438.7,844.8 L444.4,844.8 L450.1,844.8 L455.7,844.8 L461.4,844.8 L467.1,844.8 L472.7,844.8 L478.4,844.8 L484.1,844.8 L489.7,844.8 L495.4,844.8 L501.1,844.8 L506.7,844.8 L512.4,844.8 L518.1,844.8 L523.7,844.8 L529.4,844.8 L535.1,844.8 L540.7,844.8 L546.4,844.8 L552.1,844.8 L557.7,844.8 L563.4,844.8 L563.4,943.8 L557.7,943.8 L552.1,943.8 L546.4,943.8 L540.7,943.8 L535.1,943.8 L529.4,943.8 L523.7,943.8 L518.1,943.8 L512.4,943.8 L506.7,943.8 L501.1,943.8 L495.4,943.8 L489.7,943.8 L484.1,943.8 L478.4,943.8 L472.7,943.8 L467.1,943.8 L461.4,943.8 L455.7,943.8 L450.1,943.8 L444.4,943.8 L438.7,943.8 L433.1,943.8 L427.4,943.8 L421.7,943.8 L416.1,943.8 L410.4,943.8 L404.7,943.8 L399.1,943.8 L393.4,943.8 L387.7,943.8 L382.1,943.8 L376.4,943.8 L370.7,943.8 L365.1,943.8 L359.4,943.8 L353.7,943.8 L348,943.8 L342.4,943.8 L336.7,943.8 L331,943.8 L325.4,943.8 L319.7,943.8 L314,943.8 L308.4,943.8 L302.7,943.8 L297,943.8 L291.4,943.8 L285.7,943.8 L280,943.8 L274.4,943.8 L268.7,943.8 L263,943.8 L257.4,943.8 L251.7,943.8 L246,943.8 L240.4,943.8 L234.7,943.8 L229,943.8 L223.4,943.8 L217.7,943.8 L212,943.8 L206.4,943.8 L200.7,943.8 L195,943.8 L189.4,943.8 L183.7,943.8 L178,943.8 L172.4,943.8 L166.7,943.8 L161,943.8 L155.4,943.8 L149.7,943.8 L144,943.8 L138.4,943.8 L132.7,943.8 L127,943.8 L121.4,943.8 L115.7,943.8 L110,943.8 L104.4,943.8 L98.7,943.8 L93,943.8 L87.4,943.8 L81.7,943.8 L76,943.8 L70.4,943.8 L64.7,943.8Z" fill="#00A69B" fill-opacity="0.5"/><path d="M64.7,844.8 L70.4,844.8 L76,844.8 L81.7,844.8 L87.4,844.8 L93,844.8 L98.7,844.8 L104.4,844.8 L110,844.8 L115.7,844.8 L121.4,844.8 L127,844.8 L132.7,844.8 L138.4,844.8 L144,844.8 L149.7,844.8 L155.4,844.8 L161,844.8 L166.7,844.8 L172.4,844.8 L178,844.8 L183.7,844.8 L189.4,844.8 L195,844.8 L200.7,844.8 L206.4,844.8 L212,844.8 L217.7,844.8 L223.4,844.8 L229,844.8 L234.7,844.8 L240.4,844.8 L246,844.8 L251.7,844.8 L257.4,844.8 L263,844.8 L268.7,844.8 L274.4,844.8 L280,844.8 L285.7,844.8 L291.4,844.8 L297,844.8 L302.7,844.8 L308.4,844.8 L314,844.8 L319.7,844.8 L325.4,844.8 L331,844.8 L336.7,844.8 L342.4,844.8 L348,844.8 L353.7,844.8 L359.4,844.8 L365.1,844.8 L370.7,844.8 L376.4,844.8 L382.1,844.8 L387.7,844.8 L393.4,844.8 L399.1,844.8 L404.7,844.8 L410.4,844.8 L416.1,844.8 L421.7,844.8 L427.4,844.8 L433.1,844.8 L438.7,844.8 L444.4,844.8 L450.1,844.8 L455.7,844.8 L461.4,844.8 L467.1,844.8 L472.7,844.8 L478.4,844.8 L484.1,844.8 L489.7,844.8 L495.4,844.8 L501.1,844.8 L506.7,844.8 L512.4,844.8 L518.1,844.8 L523.7,844.8 L529.4,844.8 L535.1,844.8 L540.7,844.8 L546.4,844.8 L552.1,844.8 L557.7,844.8 L563.4,844.8" fill="none" stroke="#00A69B" stroke-width="1" stroke-linejoin="round"/><path d="M63.6,844.8a1.1,1.1 0 1,0 2.2,0a1.1,1.1 0 1,0 -2.2,0M69.3,844.8a1.1,1.1 0 1,0 2.2,0a1.1,1.1 0 1,0 -2.2,0M74.9,844.8a1.1,1.1 0 1,0 2.2,0a1.1,1.1 0 1,0 -2.2,0M80.6,844.8a1.1,1.1 0 1,0 2.2,0a1.1,1.1 0 1,0 -2.2,0M86.3,844.8a1.1,1.1 0 1,0 2.2,0a1.1,1.1 0 1,0 -2.2,0M91.9,844.8a1.1,1.1 0 1,0 2.2,0a1.1,1.1 0 1,0 -2.2,0M97.6,844.8a1.1,1.1 0 1,0 2.2,0a1.1,1.1 0 1,0 -2.2,0M103.3,844.8a1.1,1.1 0 1,0 2.2,0a1.1,1.1 0 1,0 -2.2,0M108.9,844.8a1.1,1.1 0 1,0 2.2,0a1.1,1.1 0 1,0 -2.2,0M114.6,844.8a1.1,1.1 0 1,0 2.2,0a1.1,1.1 0 1,0 -2.2,0M120.3,844.8a1.1,1.1 0 1,0 2.2,0a1.1,1.1 0 1,0 -2.2,0M125.9,844.8a1.1,1.1 0 1,0 2.2,0a1.1,1.1 0 1,0 -2.2,0M131.6,844.8a1.1,1.1 0 1,0 2.2,0a1.1,1.1 0 1,0 -2.2,0M137.3,844.8a1.1,1.1 0 1,0 2.2,0a1.1,1.1 0 1,0 -2.2,0M142.9,844.8a1.1,1.1 0 1,0 2.2,0a1.1,1.1 0 1,0 -2.2,0M148.6,844.8a1.1,1.1 0 1,0 2.2,0a1.1,1.1 0 1,0 -2.2,0M154.3,844.8a1.1,1.1 0 1,0 2.2,0a1.1,1.1 0 1,0 -2.2,0M159.9,844.8a1.1,1.1 0 1,0 2.2,0a1.1,1.1 0 1,0 -2.2,0M165.6,844.8a1.1,1.1 0 1,0 2.2,0a1.1,1.1 0 1,0 -2.2,0M171.3,844.8a1.1,1.1 0 1,0 2.2,0a1.1,1.1 0 1,0 -2.2,0M176.9,844.8a1.1,1.1 0 1,0 2.2,0a1.1,1.1 0 1,0 -2.2,0M182.6,844.8a1.1,1.1 0 1,0 2.2,0a1.1,1.1 0 1,0 -2.2,0M188.3,844.8a1.1,1.1 0 1,0 2.2,0a1.1,1.1 0 1,0 -2.2,0M193.9,844.8a1.1,1.1 0 1,0 2.2,0a1.1,1.1 0 1,0 -2.2,0M199.6,844.8a1.1,1.1 0 1,0 2.2,0a1.1,1.1 0 1,0 -2.2,0M205.3,844.8a1.1,1.1 0 1,0 2.2,0a1.1,1.1 0 1,0 -2.2,0M210.9,844.8a1.1,1.1 0 1,0 2.2,0a1.1,1.1 0 1,0 -2.2,0M216.6,844.8a1.1,1.1 0 1,0 2.2,0a1.1,1.1 0 1,0 -2.2,0M222.3,844.8a1.1,1.1 0 1,0 2.2,0a1.1,1.1 0 1,0 -2.2,0M227.9,844.8a1.1,1.1 0 1,0 2.2,0a1.1,1.1 0 1,0 -2.2,0M233.6,844.8a1.1,1.1 0 1,0 2.2,0a1.1,1.1 0 1,0 -2.2,0M239.3,844.8a1.1,1.1 0 1,0 2.2,0a1.1,1.1 0 1,0 -2.2,0M244.9,844.8a1.1,1.1 0 1,0 2.2,0a1.1,1.1 0 1,0 -2.2,0M250.6,844.8a1.1,1.1 0 1,0 2.2,0a1.1,1.1 0 1,0 -2.2,0M256.3,844.8a1.1,1.1 0 1,0 2.2,0a1.1,1.1 0 1,0 -2.2,0M261.9,844.8a1.1,1.1 0 1,0 2.2,0a1.1,1.1 0 1,0 -2.2,0M267.6,844.8a1.1,1.1 0 1,0 2.2,0a1.1,1.1 0 1,0 -2.2,0M273.3,844.8a1.1,1.1 0 1,0 2.2,0a1.1,1.1 0 1,0 -2.2,0M278.9,844.8a1.1,1.1 0 1,0 2.2,0a1.1,1.1 0 1,0 -2.2,0M284.6,844.8a1.1,1.1 0 1,0 2.2,0a1.1,1.1 0 1,0 -2.2,0M290.3,844.8a1.1,1.1 0 1,0 2.2,0a1.1,1.1 0 1,0 -2.2,0M295.9,844.8a1.1,1.1 0 1,0 2.2,0a1.1,1.1 0 1,0 -2.2,0M301.6,844.8a1.1,1.1 0 1,0 2.2,0a1.1,1.1 0 1,0 -2.2,0M307.3,844.8a1.1,1.1 0 1,0 2.2,0a1.1,1.1 0 1,0 -2.2,0M312.9,844.8a1.1,1.1 0 1,0 2.2,0a1.1,1.1 0 1,0 -2.2,0M318.6,844.8a1.1,1.1 0 1,0 2.2,0a1.1,1.1 0 1,0 -2.2,0M324.3,844.8a1.1,1.1 0 1,0 2.2,0a1.1,1.1 0 1,0 -2.2,0M329.9,844.8a1.1,1.1 0 1,0 2.2,0a1.1,1.1 0 1,0 -2.2,0M335.6,844.8a1.1,1.1 0 1,0 2.2,0a1.1,1.1 0 1,0 -2.2,0M341.3,844.8a1.1,1.1 0 1,0 2.2,0a1.1,1.1 0 1,0 -2.2,0M346.9,844.8a1.1,1.1 0 1,0 2.2,0a1.1,1.1 0 1,0 -2.2,0M352.6,844.8a1.1,1.1 0 1,0 2.2,0a1.1,1.1 0 1,0 -2.2,0M358.3,844.8a1.1,1.1 0 1,0 2.2,0a1.1,1.1 0 1,0 -2.2,0M364,844.8a1.1,1.1 0 1,0 2.2,0a1.1,1.1 0 1,0 -2.2,0M369.6,844.8a1.1,1.1 0 1,0 2.2,0a1.1,1.1 0 1,0 -2.2,0M375.3,844.8a1.1,1.1 0 1,0 2.2,0a1.1,1.1 0 1,0 -2.2,0M381,844.8a1.1,1.1 0 1,0 2.2,0a1.1,1.1 0 1,0 -2.2,0M386.6,844.8a1.1,1.1 0 1,0 2.2,0a1.1,1.1 0 1,0 -2.2,0M392.3,844.8a1.1,1.1 0 1,0 2.2,0a1.1,1.1 0 1,0 -2.2,0M398,844.8a1.1,1.1 0 1,0 2.2,0a1.1,1.1 0 1,0 -2.2,0M403.6,844.8a1.1,1.1 0 1,0 2.2,0a1.1,1.1 0 1,0 -2.2,0M409.3,844.8a1.1,1.1 0 1,0 2.2,0a1.1,1.1 0 1,0 -2.2,0M415,844.8a1.1,1.1 0 1,0 2.2,0a1.1,1.1 0 1,0 -2.2,0M420.6,844.8a1.1,1.1 0 1,0 2.2,0a1.1,1.1 0 1,0 -2.2,0M426.3,844.8a1.1,1.1 0 1,0 2.2,0a1.1,1.1 0 1,0 -2.2,0M432,844.8a1.1,1.1 0 1,0 2.2,0a1.1,1.1 0 1,0 -2.2,0M437.6,844.8a1.1,1.1 0 1,0 2.2,0a1.1,1.1 0 1,0 -2.2,0M443.3,844.8a1.1,1.1 0 1,0 2.2,0a1.1,1.1 0 1,0 -2.2,0M449,844.8a1.1,1.1 0 1,0 2.2,0a1.1,1.1 0 1,0 -2.2,0M454.6,844.8a1.1,1.1 0 1,0 2.2,0a1.1,1.1 0 1,0 -2.2,0M460.3,844.8a1.1,1.1 0 1,0 2.2,0a1.1,1.1 0 1,0 -2.2,0M466,844.8a1.1,1.1 0 1,0 2.2,0a1.1,1.1 0 1,0 -2.2,0M471.6,844.8a1.1,1.1 0 1,0 2.2,0a1.1,1.1 0 1,0 -2.2,0M477.3,844.8a1.1,1.1 0 1,0 2.2,0a1.1,1.1 0 1,0 -2.2,0M483,844.8a1.1,1.1 0 1,0 2.2,0a1.1,1.1 0 1,0 -2.2,0M488.6,844.8a1.1,1.1 0 1,0 2.2,0a1.1,1.1 0 1,0 -2.2,0M494.3,844.8a1.1,1.1 0 1,0 2.2,0a1.1,1.1 0 1,0 -2.2,0M500,844.8a1.1,1.1 0 1,0 2.2,0a1.1,1.1 0 1,0 -2.2,0M505.6,844.8a1.1,1.1 0 1,0 2.2,0a1.1,1.1 0 1,0 -2.2,0M511.3,844.8a1.1,1.1 0 1,0 2.2,0a1.1,1.1 0 1,0 -2.2,0M517,844.8a1.1,1.1 0 1,0 2.2,0a1.1,1.1 0 1,0 -2.2,0M522.6,844.8a1.1,1.1 0 1,0 2.2,0a1.1,1.1 0 1,0 -2.2,0M528.3,844.8a1.1,1.1 0 1,0 2.2,0a1.1,1.1 0 1,0 -2.2,0M534,844.8a1.1,1.1 0 1,0 2.2,0a1.1,1.1 0 1,0 -2.2,0M539.6,844.8a1.1,1.1 0 1,0 2.2,0a1.1,1.1 0 1,0 -2.2,0M545.3,844.8a1.1,1.1 0 1,0 2.2,0a1.1,1.1 0 1,0 -2.2,0M551,844.8a1.1,1.1 0 1,0 2.2,0a1.1,1.1 0 1,0 -2.2,0M556.6,844.8a1.1,1.1 0 1,0 2.2,0a1.1,1.1 0 1,0 -2.2,0M562.3,844.8a1.1,1.1 0 1,0 2.2,0a1.1,1.1 0 1,0 -2.2,0" fill="#fff" fill-opacity="0.6" stroke="#00A69B" stroke-width="1"/><rect x="568.8" y="917.5" width=".9" height="26" fill="url(#fade)"/><circle cx="611" cy="655" r="4" fill="#6F87D8"/><text x="623.2" y="659" class="lg">metricbeat</text><circle cx="611" cy="677" r="4" fill="#57C17B"/><text x="623.2" y="681" class="lg">filebeat</text><circle cx="611" cy="699" r="4" fill="#00A69B"/><text x="623.2" y="703" class="lg">elastic-agent</text>
</svg>
</body>
</html>
